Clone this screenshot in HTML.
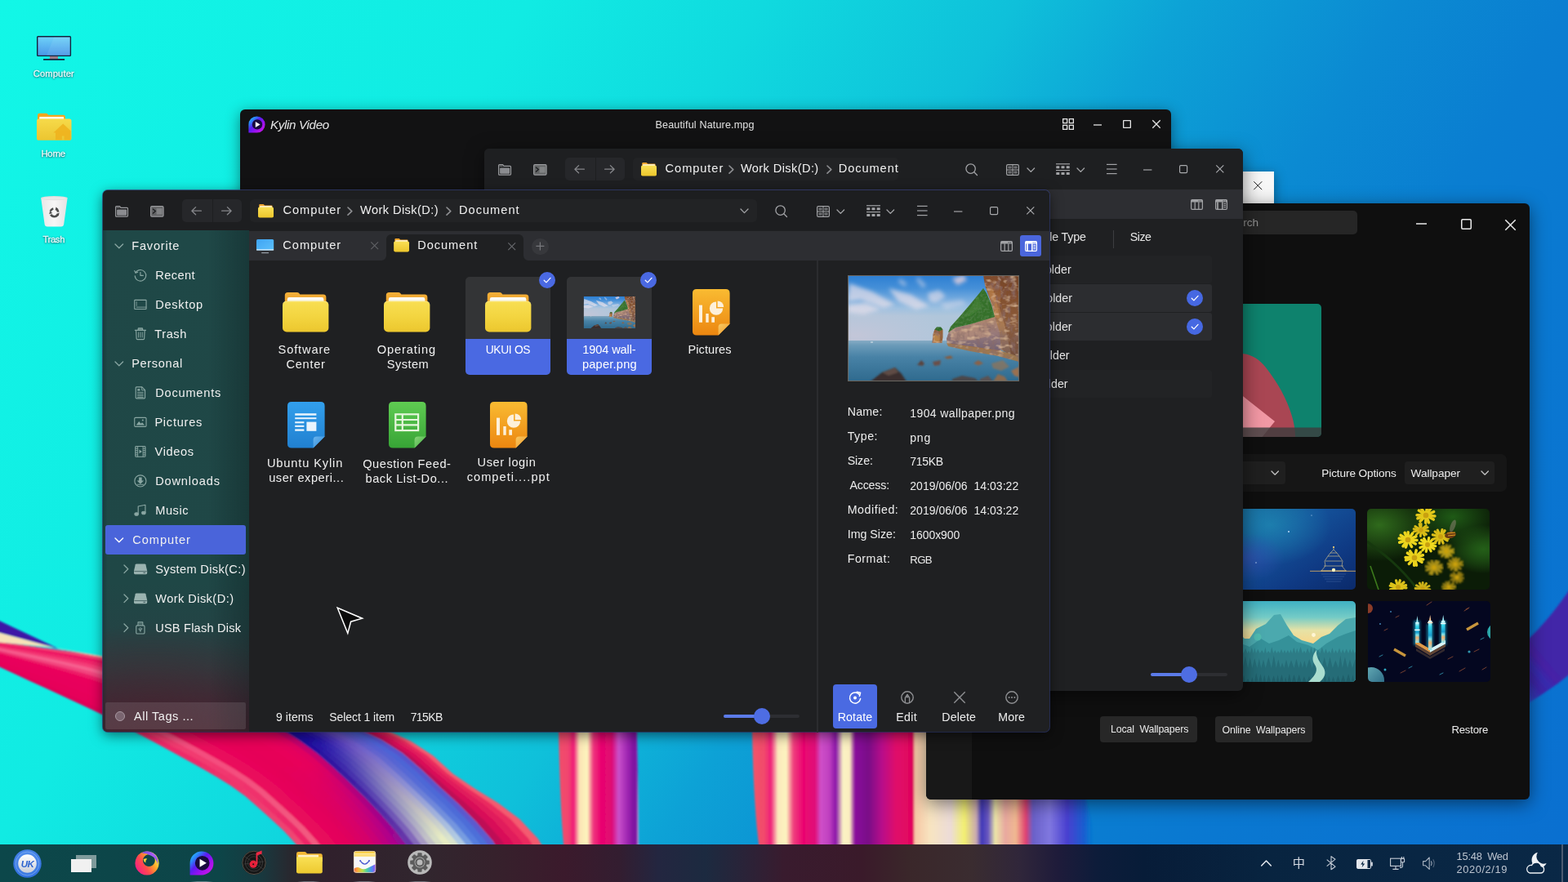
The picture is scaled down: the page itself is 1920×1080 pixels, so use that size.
<!DOCTYPE html>
<html lang="en">
<head>
<meta charset="utf-8">
<title>UKUI Desktop</title>
<style>
*{box-sizing:border-box;margin:0;padding:0}
html,body{width:1920px;height:1080px;overflow:hidden;background:#0d9fd6}
body{font-family:"Liberation Sans","Noto Sans CJK SC",sans-serif;color:#f2f2f2;font-size:14px;line-height:18px}
#root{position:absolute;left:0;top:0;width:1920px;height:1080px;overflow:hidden;will-change:transform}
.abs{position:absolute}
.win{position:absolute;overflow:hidden}
.sh{position:absolute;border-radius:6px}
.t{position:absolute;white-space:pre}
svg{position:absolute;overflow:visible}
.ic{stroke:#b4b5b8;fill:none;stroke-width:1.3;stroke-linecap:round;stroke-linejoin:round}
</style>
</head>
<body>
<div id="root">
<!-- wall -->
<svg id="wall" width="1920" height="1080" viewBox="0 0 1920 1080" style="left:0;top:0">
<defs>
<linearGradient id="wg" gradientUnits="userSpaceOnUse" x1="0" y1="0" x2="1858" y2="1174">
<stop offset="0" stop-color="#12f7e7"/>
<stop offset="0.25" stop-color="#11ebe3"/>
<stop offset="0.36" stop-color="#10dadf"/>
<stop offset="0.48" stop-color="#0fc0da"/>
<stop offset="0.56" stop-color="#0da2d6"/>
<stop offset="0.66" stop-color="#0b8ad2"/>
<stop offset="0.74" stop-color="#0a7ed1"/>
<stop offset="0.82" stop-color="#0a78d1"/>
<stop offset="1" stop-color="#0a6fd0"/>
</linearGradient>
<linearGradient id="v1" gradientUnits="userSpaceOnUse" x1="684" y1="0" x2="782" y2="0">
<stop offset="0" stop-color="#f0506a"/>
<stop offset="0.12" stop-color="#f2456f"/>
<stop offset="0.19" stop-color="#f01a78"/>
<stop offset="0.26" stop-color="#fbe3b5"/>
<stop offset="0.36" stop-color="#fdf6bd"/>
<stop offset="0.43" stop-color="#f03a80"/>
<stop offset="0.52" stop-color="#ea056f"/>
<stop offset="0.66" stop-color="#e00872"/>
<stop offset="0.75" stop-color="#c94fca"/>
<stop offset="0.85" stop-color="#a32ab4"/>
<stop offset="0.95" stop-color="#7b109e"/>
<stop offset="0.985" stop-color="#8a30b0"/>
<stop offset="1" stop-color="#f0e8f8"/>
</linearGradient>
<linearGradient id="v2" gradientUnits="userSpaceOnUse" x1="921" y1="0" x2="1340" y2="0">
<stop offset="0" stop-color="#f0566a"/>
<stop offset="0.035" stop-color="#f24a6c"/>
<stop offset="0.055" stop-color="#f0207a"/>
<stop offset="0.075" stop-color="#fbe8bb"/>
<stop offset="0.1" stop-color="#fdf4c0"/>
<stop offset="0.12" stop-color="#f0407e"/>
<stop offset="0.15" stop-color="#ea056f"/>
<stop offset="0.185" stop-color="#e0107a"/>
<stop offset="0.2" stop-color="#cf50c8"/>
<stop offset="0.225" stop-color="#c040c0"/>
<stop offset="0.245" stop-color="#8a18a8"/>
<stop offset="0.265" stop-color="#fbf3c4"/>
<stop offset="0.285" stop-color="#fbeec0"/>
<stop offset="0.3" stop-color="#8a0c9c"/>
<stop offset="0.34" stop-color="#7a0a88"/>
<stop offset="0.38" stop-color="#b8108a"/>
<stop offset="0.42" stop-color="#e00a6a"/>
<stop offset="0.47" stop-color="#e2055e"/>
<stop offset="0.475" stop-color="#f7c6a4"/>
<stop offset="0.52" stop-color="#f8e4c0"/>
<stop offset="0.58" stop-color="#ecdcd8"/>
<stop offset="0.62" stop-color="#f3f070"/>
<stop offset="0.655" stop-color="#c8a8b0"/>
<stop offset="0.67" stop-color="#4038b8"/>
<stop offset="0.69" stop-color="#6a58c0"/>
<stop offset="0.71" stop-color="#ebe6a8"/>
<stop offset="0.74" stop-color="#e8a8a0"/>
<stop offset="0.77" stop-color="#f0b890"/>
<stop offset="0.8" stop-color="#e04070"/>
<stop offset="0.82" stop-color="#6a60c8"/>
<stop offset="0.87" stop-color="#8078e0"/>
<stop offset="0.92" stop-color="#4a40d0"/>
<stop offset="0.97" stop-color="#1a5ed0"/>
<stop offset="1" stop-color="#0a6fd0" stop-opacity="0"/>
</linearGradient>
<linearGradient id="pr" gradientUnits="userSpaceOnUse" x1="1873" y1="860" x2="1912" y2="827">
<stop offset="0" stop-color="#2a4cc4"/>
<stop offset="0.15" stop-color="#3438b8"/>
<stop offset="0.4" stop-color="#3d24a8"/>
<stop offset="0.6" stop-color="#382cb0"/>
<stop offset="0.82" stop-color="#4720a6"/>
<stop offset="1" stop-color="#4226a8"/>
</linearGradient>
<filter id="bl2" x="-5%" y="-5%" width="110%" height="110%"><feGaussianBlur stdDeviation="1.2"/></filter>
</defs>
<rect width="1920" height="1080" fill="url(#wg)"/>
<path d="M1926 716C1906 745 1890 765 1873 781C1850 802 1825 820 1790 840L1790 902C1830 886 1855 872 1873 860C1895 846 1910 836 1926 822Z" fill="url(#pr)" filter="url(#bl2)"/>
<path d="M900 560C915 700 921 820 921 897C922 950 925 1000 929 1033L932 1085L1360 1085C1345 1040 1335 1000 1330 978C1310 900 1300 800 1310 560Z" fill="url(#v2)" filter="url(#bl2)"/>
<path d="M660 560C676 700 682 820 684 897C685 950 687 1000 690 1033L692 1085L785 1085C784 1060 783 1045 782 1033C782 990 781 940 780 897C778 800 772 700 760 560Z" fill="url(#v1)" filter="url(#bl2)"/>
<g filter="url(#bl2)">
<defs><linearGradient id="rg1" gradientUnits="userSpaceOnUse" x1="245.5" y1="935.0" x2="365.6" y2="1030.0"><stop offset="0" stop-color="#ee2c69"/><stop offset="1" stop-color="#ef4773"/></linearGradient>
<linearGradient id="rg2" gradientUnits="userSpaceOnUse" x1="258.6" y1="935.0" x2="375.4" y2="1030.0"><stop offset="0" stop-color="#f23a70"/><stop offset="1" stop-color="#ed2668"/></linearGradient>
<linearGradient id="rg3" gradientUnits="userSpaceOnUse" x1="271.4" y1="935.0" x2="385.2" y2="1030.0"><stop offset="0" stop-color="#f44d7e"/><stop offset="1" stop-color="#f25a80"/></linearGradient>
<linearGradient id="rg4" gradientUnits="userSpaceOnUse" x1="284.2" y1="935.0" x2="394.9" y2="1030.0"><stop offset="0" stop-color="#ea095c"/><stop offset="1" stop-color="#e9095c"/></linearGradient>
<linearGradient id="rg5" gradientUnits="userSpaceOnUse" x1="296.9" y1="935.0" x2="404.5" y2="1030.0"><stop offset="0" stop-color="#e9075b"/><stop offset="1" stop-color="#e7085c"/></linearGradient>
<linearGradient id="rg6" gradientUnits="userSpaceOnUse" x1="309.2" y1="935.0" x2="414.1" y2="1030.0"><stop offset="0" stop-color="#e8045a"/><stop offset="1" stop-color="#e5065c"/></linearGradient>
<linearGradient id="rg7" gradientUnits="userSpaceOnUse" x1="321.1" y1="935.0" x2="423.7" y2="1030.0"><stop offset="0" stop-color="#e70159"/><stop offset="1" stop-color="#e3055c"/></linearGradient>
<linearGradient id="rg8" gradientUnits="userSpaceOnUse" x1="332.9" y1="935.0" x2="433.4" y2="1030.0"><stop offset="0" stop-color="#e60058"/><stop offset="1" stop-color="#df035f"/></linearGradient>
<linearGradient id="rg9" gradientUnits="userSpaceOnUse" x1="344.6" y1="935.0" x2="443.0" y2="1030.0"><stop offset="0" stop-color="#e70159"/><stop offset="1" stop-color="#d90266"/></linearGradient>
<linearGradient id="rg10" gradientUnits="userSpaceOnUse" x1="356.1" y1="935.0" x2="452.6" y2="1030.0"><stop offset="0" stop-color="#e70259"/><stop offset="1" stop-color="#d4006c"/></linearGradient>
<linearGradient id="rg11" gradientUnits="userSpaceOnUse" x1="367.0" y1="935.0" x2="462.3" y2="1030.0"><stop offset="0" stop-color="#e8035a"/><stop offset="1" stop-color="#c90076"/></linearGradient>
<linearGradient id="rg12" gradientUnits="userSpaceOnUse" x1="377.8" y1="935.0" x2="471.9" y2="1030.0"><stop offset="0" stop-color="#e6035b"/><stop offset="1" stop-color="#bc0081"/></linearGradient>
<linearGradient id="rg13" gradientUnits="userSpaceOnUse" x1="388.6" y1="935.0" x2="481.5" y2="1030.0"><stop offset="0" stop-color="#e10160"/><stop offset="1" stop-color="#ae018c"/></linearGradient>
<linearGradient id="rg14" gradientUnits="userSpaceOnUse" x1="397.5" y1="935.0" x2="489.5" y2="1030.0"><stop offset="0" stop-color="#c7046e"/><stop offset="1" stop-color="#970794"/></linearGradient>
<linearGradient id="rg15" gradientUnits="userSpaceOnUse" x1="369.6" y1="905.0" x2="496.5" y2="1025.0"><stop offset="0" stop-color="#1b0b9e"/><stop offset="1" stop-color="#6735aa"/></linearGradient>
<linearGradient id="rg16" gradientUnits="userSpaceOnUse" x1="377.4" y1="905.0" x2="505.5" y2="1025.0"><stop offset="0" stop-color="#1e0ea3"/><stop offset="1" stop-color="#8469bb"/></linearGradient>
<linearGradient id="rg17" gradientUnits="userSpaceOnUse" x1="385.2" y1="905.0" x2="514.5" y2="1025.0"><stop offset="0" stop-color="#2111a8"/><stop offset="1" stop-color="#a79bc4"/></linearGradient>
<linearGradient id="rg18" gradientUnits="userSpaceOnUse" x1="393.1" y1="905.0" x2="523.6" y2="1025.0"><stop offset="0" stop-color="#2a19ad"/><stop offset="1" stop-color="#c2c2c7"/></linearGradient>
<linearGradient id="rg19" gradientUnits="userSpaceOnUse" x1="401.1" y1="905.0" x2="532.7" y2="1025.0"><stop offset="0" stop-color="#3b26b4"/><stop offset="1" stop-color="#d7dec5"/></linearGradient>
<linearGradient id="rg20" gradientUnits="userSpaceOnUse" x1="409.3" y1="905.0" x2="541.7" y2="1025.0"><stop offset="0" stop-color="#4c34bb"/><stop offset="1" stop-color="#e7ecc3"/></linearGradient>
<linearGradient id="rg21" gradientUnits="userSpaceOnUse" x1="417.7" y1="905.0" x2="550.8" y2="1025.0"><stop offset="0" stop-color="#5e46c0"/><stop offset="1" stop-color="#dae4cd"/></linearGradient>
<linearGradient id="rg22" gradientUnits="userSpaceOnUse" x1="426.2" y1="905.0" x2="559.9" y2="1025.0"><stop offset="0" stop-color="#6753c5"/><stop offset="1" stop-color="#b1cbe2"/></linearGradient>
<linearGradient id="rg23" gradientUnits="userSpaceOnUse" x1="434.9" y1="905.0" x2="569.0" y2="1025.0"><stop offset="0" stop-color="#5e58ca"/><stop offset="1" stop-color="#779de1"/></linearGradient>
<linearGradient id="rg24" gradientUnits="userSpaceOnUse" x1="443.8" y1="905.0" x2="578.1" y2="1025.0"><stop offset="0" stop-color="#565ccf"/><stop offset="1" stop-color="#567ede"/></linearGradient>
<linearGradient id="rg25" gradientUnits="userSpaceOnUse" x1="452.8" y1="905.0" x2="587.2" y2="1025.0"><stop offset="0" stop-color="#4d61d4"/><stop offset="1" stop-color="#4d6fd9"/></linearGradient>
<linearGradient id="rg26" gradientUnits="userSpaceOnUse" x1="460.4" y1="905.0" x2="594.8" y2="1025.0"><stop offset="0" stop-color="#5353cc"/><stop offset="1" stop-color="#5d5bcf"/></linearGradient>
</defs>
<polygon points="-40.0,800.0 -20.3,808.0 -0.8,816.6 18.6,825.5 37.9,834.4 57.3,843.3 76.6,852.3 95.9,861.3 115.2,870.3 134.4,879.5 153.3,889.4 171.9,899.7 179.2,894.3 160.0,883.9 140.5,874.1 120.7,865.0 100.7,856.2 80.8,847.5 60.7,839.0 40.7,830.6 20.6,822.2 0.6,813.9 -19.6,805.7 -40.0,798.2" fill="#e00559"/>
<polygon points="153.3,889.4 171.9,899.7 190.6,909.8 209.4,920.0 228.0,930.2 246.6,940.6 265.1,951.2 283.2,962.4 300.5,974.9 316.4,989.1 332.2,1003.3 347.8,1017.8 362.2,1033.5 375.2,1050.3 387.7,1067.6 400.0,1085.0 412.1,1085.0 399.8,1067.0 387.3,1049.1 373.9,1031.8 359.2,1015.7 343.3,1000.8 327.1,986.1 310.9,971.5 293.3,958.5 274.9,946.9 256.0,935.9 236.9,925.3 217.7,914.9 198.5,904.6 179.2,894.3 160.0,883.9" fill="url(#rg1)"/>
<polygon points="-40.0,798.6 -19.8,806.3 0.2,814.6 20.1,823.0 40.0,831.6 59.8,840.1 79.7,848.8 99.5,857.5 119.3,866.4 138.9,875.5 158.2,885.3 164.9,879.9 145.0,870.1 124.7,861.0 104.3,852.4 83.8,844.0 63.3,835.8 42.8,827.7 22.2,819.7 1.6,811.8 -19.1,804.0 -40.0,796.8" fill="#e6045a"/>
<polygon points="138.9,875.5 158.2,885.3 177.3,895.7 196.4,905.9 215.5,916.2 234.6,926.6 253.6,937.1 272.3,948.0 290.7,959.6 308.2,972.4 324.3,986.9 340.4,1001.4 356.3,1016.2 370.9,1032.3 384.2,1049.4 396.7,1067.1 408.9,1085.0 421.0,1085.0 408.8,1066.5 396.2,1048.2 382.6,1030.6 367.6,1014.1 351.5,998.9 335.1,983.9 318.6,969.0 300.8,955.7 282.1,943.6 262.9,932.4 243.5,921.6 223.9,911.1 204.2,900.7 184.6,890.3 164.9,879.9 145.0,870.1" fill="url(#rg2)"/>
<polygon points="-40.0,797.3 -19.3,804.6 1.2,812.5 21.6,820.6 42.0,828.7 62.4,836.9 82.8,845.2 103.1,853.7 123.3,862.4 143.4,871.5 163.2,881.3 169.9,875.9 149.5,866.1 128.8,857.0 107.9,848.6 86.9,840.5 65.9,832.6 44.8,824.9 23.7,817.3 2.6,809.7 -18.6,802.3 -40.0,795.5" fill="#e7045a"/>
<polygon points="143.4,871.5 163.2,881.3 182.7,891.7 202.2,902.0 221.7,912.4 241.2,922.9 260.5,933.7 279.6,944.8 298.2,956.7 315.9,969.9 332.3,984.6 348.6,999.5 364.7,1014.7 379.5,1031.0 393.1,1048.5 405.7,1066.6 417.9,1085.0 429.9,1085.0 417.8,1066.0 405.1,1047.3 391.3,1029.4 376.1,1012.6 359.7,997.0 343.0,981.7 326.3,966.5 308.3,952.8 289.3,940.4 269.8,929.0 250.0,918.0 230.1,907.3 210.0,896.8 190.0,886.3 169.9,875.9 149.5,866.1" fill="url(#rg3)"/>
<polygon points="-40.0,795.9 -18.8,802.9 2.2,810.5 23.2,818.1 44.1,825.9 65.0,833.7 85.8,841.7 106.7,849.9 127.4,858.4 148.0,867.5 168.2,877.3 174.8,871.9 154.1,862.0 132.9,853.1 111.5,844.8 90.0,837.0 68.5,829.4 46.9,822.1 25.2,814.8 3.6,807.7 -18.1,800.6 -40.0,794.1" fill="#e8055b"/>
<polygon points="148.0,867.5 168.2,877.3 188.1,887.7 208.0,898.1 227.9,908.6 247.7,919.3 267.4,930.2 286.8,941.6 305.6,953.8 323.6,967.4 340.3,982.4 356.8,997.6 373.1,1013.1 388.2,1029.8 402.0,1047.6 414.7,1066.1 426.8,1085.0 438.8,1085.0 426.8,1065.5 414.0,1046.3 399.9,1028.1 384.5,1011.1 367.9,995.1 351.0,979.4 334.0,964.0 315.7,949.9 296.5,937.2 276.7,925.5 256.6,914.3 236.3,903.5 215.8,892.9 195.3,882.4 174.8,871.9 154.1,862.0" fill="url(#rg4)"/>
<polygon points="-40.0,794.6 -18.3,801.2 3.2,808.4 24.7,815.7 46.1,823.1 67.6,830.5 88.9,838.2 110.2,846.2 131.5,854.5 152.5,863.4 173.1,873.3 179.8,867.9 158.6,858.0 137.0,849.1 115.1,841.1 93.1,833.5 71.0,826.2 48.9,819.2 26.8,812.4 4.6,805.6 -17.6,798.9 -40.0,792.7" fill="#e8055b"/>
<polygon points="152.5,863.4 173.1,873.3 193.5,883.7 213.8,894.2 234.1,904.8 254.3,915.6 274.3,926.7 294.0,938.3 313.1,950.9 331.3,964.8 348.2,980.2 365.0,995.7 381.5,1011.6 396.9,1028.6 410.9,1046.7 423.7,1065.6 435.7,1085.0 447.8,1085.0 435.8,1065.0 423.0,1045.4 408.6,1026.9 392.9,1009.5 376.1,993.2 359.0,977.2 341.7,961.4 323.2,947.0 303.8,934.0 283.6,922.0 263.1,910.7 242.4,899.7 221.6,889.0 200.7,878.4 179.8,867.9 158.6,858.0" fill="url(#rg5)"/>
<polygon points="-40.0,793.2 -17.8,799.5 4.3,806.3 26.2,813.2 48.2,820.2 70.1,827.3 92.0,834.7 113.8,842.4 135.5,850.5 157.0,859.4 178.1,869.3 184.7,863.9 163.1,854.0 141.0,845.1 118.7,837.3 96.2,829.9 73.6,823.0 51.0,816.4 28.3,809.9 5.6,803.5 -17.1,797.2 -40.0,791.4" fill="#e9055b"/>
<polygon points="157.0,859.4 178.1,869.3 198.8,879.8 219.6,890.3 240.3,901.0 260.8,911.9 281.2,923.2 301.2,935.1 320.6,948.0 339.0,962.3 356.2,978.0 373.3,993.8 390.0,1010.1 405.6,1027.3 419.8,1045.7 432.7,1065.1 444.6,1085.0 456.7,1085.0 444.8,1064.5 431.9,1044.5 417.3,1025.7 401.3,1008.0 384.3,991.3 366.9,975.0 349.3,958.9 330.7,944.1 311.0,930.8 290.5,918.6 269.7,907.0 248.6,895.9 227.4,885.0 206.1,874.4 184.7,863.9 163.1,854.0" fill="url(#rg6)"/>
<polygon points="-40.0,791.9 -17.3,797.8 5.3,804.3 27.8,810.8 50.2,817.4 72.7,824.1 95.1,831.2 117.4,838.6 139.6,846.5 161.5,855.4 167.6,850.0 145.1,841.2 122.2,833.5 99.2,826.4 76.2,819.8 53.0,813.5 29.8,807.5 6.6,801.5 -16.6,795.5 -40.0,790.0" fill="#ea065c"/>
<polygon points="139.6,846.5 161.5,855.4 183.0,865.3 204.2,875.8 225.4,886.4 246.5,897.2 267.4,908.3 288.1,919.8 308.5,931.9 328.1,945.2 346.7,959.8 364.1,975.8 381.5,991.9 398.4,1008.5 414.2,1026.1 428.8,1044.8 441.7,1064.6 453.6,1085.0 465.6,1085.0 453.8,1064.0 440.8,1043.6 425.9,1024.5 409.7,1006.4 392.5,989.4 374.9,972.8 357.0,956.4 338.2,941.3 318.2,927.6 297.5,915.1 276.3,903.4 254.8,892.1 233.2,881.1 211.5,870.4 189.7,859.9 167.6,850.0 145.1,841.2" fill="url(#rg7)"/>
<polygon points="-40.0,790.5 -16.8,796.1 6.3,802.2 29.3,808.3 52.3,814.5 75.3,820.9 98.2,827.7 121.0,834.8 143.7,842.6 166.0,851.4 172.1,846.0 149.2,837.2 125.8,829.7 102.3,822.9 78.7,816.6 55.1,810.7 31.4,805.0 7.6,799.4 -16.1,793.8 -40.0,788.7" fill="#ed1d68"/>
<polygon points="143.7,842.6 166.0,851.4 188.0,861.3 209.6,871.8 231.2,882.5 252.6,893.4 274.0,904.6 295.0,916.3 315.7,928.7 335.6,942.3 354.4,957.3 372.1,973.6 389.7,990.0 406.8,1007.0 422.9,1024.9 437.7,1043.9 450.7,1064.1 462.5,1085.0 474.6,1085.0 462.8,1063.5 449.7,1042.6 434.6,1023.2 418.2,1004.9 400.8,987.5 382.9,970.6 364.7,953.9 345.6,938.4 325.4,924.3 304.4,911.6 282.8,899.7 261.0,888.3 239.0,877.2 216.9,866.4 194.7,855.9 172.1,846.0 149.2,837.2" fill="url(#rg8)"/>
<polygon points="-40.0,789.1 -16.3,794.4 7.3,800.1 30.8,805.9 54.3,811.7 77.8,817.7 101.3,824.1 124.6,831.1 147.8,838.6 170.6,847.4 176.7,841.9 153.2,833.2 129.4,826.0 105.4,819.4 81.3,813.4 57.1,807.9 32.9,802.6 8.6,797.4 -15.6,792.1 -40.0,787.3" fill="#f2447e"/>
<polygon points="147.8,838.6 170.6,847.4 192.9,857.3 215.0,867.8 237.0,878.6 258.8,889.6 280.5,901.0 301.9,912.8 322.9,925.5 343.0,939.4 362.0,954.8 380.1,971.4 397.9,988.1 415.2,1005.4 431.6,1023.7 446.6,1043.0 459.7,1063.6 471.4,1085.0 483.5,1085.0 471.8,1063.0 458.6,1041.7 443.3,1022.0 426.6,1003.3 409.0,985.6 390.8,968.4 372.4,951.4 353.1,935.5 332.7,921.1 311.3,908.1 289.4,896.0 267.2,884.5 244.8,873.3 222.3,862.4 199.6,851.9 176.7,841.9 153.2,833.2" fill="url(#rg9)"/>
<polygon points="-40.0,787.8 -15.8,792.7 8.3,798.1 32.3,803.4 56.4,808.9 80.4,814.5 104.3,820.6 128.2,827.3 151.8,834.6 175.1,843.3 181.2,837.9 157.3,829.3 133.0,822.2 108.5,815.9 83.9,810.2 59.2,805.0 34.4,800.1 9.6,795.3 -15.1,790.4 -40.0,786.0" fill="#f75f8f"/>
<polygon points="151.8,834.6 175.1,843.3 197.9,853.3 220.4,863.8 242.8,874.7 265.0,885.8 287.1,897.3 308.9,909.4 330.1,922.3 350.5,936.5 369.7,952.3 388.0,969.1 406.1,986.2 423.6,1003.9 440.2,1022.4 455.5,1042.0 468.7,1063.1 480.4,1085.0 492.4,1085.0 480.8,1062.5 467.6,1040.8 451.9,1020.8 435.0,1001.8 417.2,983.7 398.8,966.2 380.1,948.9 360.6,932.6 339.9,917.9 318.2,904.7 295.9,892.4 273.3,880.7 250.6,869.4 227.6,858.5 204.6,847.9 181.2,837.9 157.3,829.3" fill="url(#rg10)"/>
<polygon points="-40.0,786.4 -15.3,791.0 9.3,796.0 33.9,801.0 58.4,806.0 83.0,811.3 107.4,817.1 131.7,823.5 155.9,830.7 179.6,839.3 185.7,833.9 161.4,825.3 136.6,818.4 111.6,812.3 86.4,807.0 61.2,802.2 35.9,797.7 10.7,793.2 -14.6,788.7 -40.0,784.6" fill="#f43e78"/>
<polygon points="155.9,830.7 179.6,839.3 202.8,849.3 225.8,859.9 248.5,870.8 271.2,882.0 293.6,893.7 315.8,905.9 337.4,919.0 358.0,933.6 377.4,949.7 396.0,966.9 414.3,984.3 432.1,1002.3 448.9,1021.2 464.4,1041.1 477.7,1062.6 489.3,1085.0 501.3,1085.0 489.8,1062.0 476.5,1039.9 460.6,1019.5 443.4,1000.3 425.4,981.8 406.7,963.9 387.8,946.4 368.1,929.8 347.1,914.7 325.1,901.2 302.5,888.7 279.5,876.9 256.4,865.5 233.0,854.5 209.5,843.8 185.7,833.9 161.4,825.3" fill="url(#rg11)"/>
<polygon points="-40.0,785.1 -14.8,789.3 10.3,794.0 35.4,798.5 60.5,803.2 85.5,808.1 110.5,813.6 135.3,819.7 160.0,826.7 165.5,821.3 140.2,814.6 114.7,808.8 89.0,803.8 63.3,799.4 37.5,795.2 11.7,791.2 -14.1,787.0 -40.0,783.2" fill="#f1266a"/>
<polygon points="135.3,819.7 160.0,826.7 184.1,835.3 207.8,845.2 231.1,855.9 254.3,866.9 277.4,878.3 300.2,890.0 322.7,902.4 344.6,915.8 365.5,930.8 385.1,947.2 404.0,964.7 422.5,982.5 440.5,1000.8 457.6,1020.0 473.4,1040.2 486.7,1062.1 498.2,1085.0 510.3,1085.0 498.8,1061.5 485.4,1039.0 469.3,1018.3 451.9,998.7 433.6,979.9 414.7,961.7 395.5,943.8 375.5,926.9 354.3,911.5 332.0,897.7 309.1,885.1 285.7,873.1 262.2,861.6 238.4,850.5 214.5,839.8 190.2,829.9 165.5,821.3 140.2,814.6" fill="url(#rg12)"/>
<polygon points="-40.0,783.7 -14.3,787.6 11.3,791.9 36.9,796.1 62.5,800.4 88.1,804.9 113.6,810.1 138.9,815.9 164.0,822.7 169.5,817.4 143.8,810.8 117.7,805.3 91.6,800.6 65.3,796.5 39.0,792.8 12.7,789.1 -13.6,785.3 -40.0,781.9" fill="#ee1463"/>
<polygon points="138.9,815.9 164.0,822.7 188.6,831.3 212.7,841.2 236.5,851.9 260.1,863.0 283.6,874.5 306.8,886.3 329.6,899.0 351.8,912.6 372.9,927.9 392.8,944.7 411.9,962.5 430.7,980.6 448.9,999.2 466.2,1018.7 482.3,1039.3 495.7,1061.6 507.1,1085.0 519.2,1085.0 507.8,1061.0 494.3,1038.0 477.9,1017.1 460.3,997.2 441.8,978.0 422.7,959.5 403.2,941.3 383.0,924.0 361.6,908.3 338.9,894.3 315.6,881.4 291.9,869.3 267.9,857.7 243.8,846.5 219.4,835.8 194.7,825.9 169.5,817.4 143.8,810.8" fill="url(#rg13)"/>
<polygon points="-40.0,782.4 -13.8,785.9 12.3,789.8 38.5,793.6 64.6,797.5 90.7,801.7 116.7,806.5 142.5,812.2 168.1,818.8 172.2,814.8 146.1,808.4 119.7,803.0 93.3,798.5 66.6,794.7 40.0,791.2 13.3,787.8 -13.3,784.2 -40.0,781.0" fill="#f24b75"/>
<polygon points="142.5,812.2 168.1,818.8 193.2,827.3 217.7,837.2 241.9,847.9 265.9,859.1 289.7,870.7 313.3,882.7 336.5,895.5 359.0,909.4 380.4,925.0 400.5,942.2 419.9,960.3 438.9,978.7 457.3,997.7 474.9,1017.5 491.2,1038.4 504.7,1061.1 516.1,1085.0 525.0,1085.0 513.7,1060.6 500.1,1037.4 483.6,1016.3 465.7,996.2 447.2,976.8 427.8,958.1 408.2,939.7 387.9,922.1 366.3,906.2 343.4,892.0 319.9,879.0 295.9,866.9 271.7,855.2 247.3,843.9 222.6,833.2 197.7,823.2 172.2,814.8 146.1,808.4" fill="url(#rg14)"/>
<polygon points="-40.0,781.0 -13.3,784.2 13.3,787.8 40.0,791.2 66.6,794.7 93.3,798.5 119.7,803.0 146.1,808.4 172.2,814.8 197.7,823.2 222.6,833.2 247.3,843.9 271.7,855.2 295.9,866.9 319.9,879.0 343.4,892.0 366.3,906.2 387.9,922.1 408.2,939.7 427.8,958.1 447.2,976.8 465.7,996.2 483.6,1016.3 500.1,1037.4 513.7,1060.6 525.0,1085.0 536.8,1085.0 525.5,1060.1 511.7,1036.6 494.8,1015.2 476.5,994.9 457.4,975.3 437.8,956.3 417.8,937.7 396.8,920.3 374.4,904.7 350.9,890.8 326.8,878.1 302.2,866.2 277.4,854.8 252.5,843.7 227.3,833.2 201.8,823.4 175.8,815.0 149.2,808.6 122.4,803.4 95.5,798.9 68.4,795.0 41.3,791.4 14.2,787.9 -12.9,784.3 -40.0,781.0" fill="url(#rg15)"/>
<polygon points="-40.0,781.0 -13.0,784.2 14.0,787.9 41.0,791.3 67.9,794.9 94.9,798.8 121.7,803.3 148.4,808.5 174.9,814.9 200.7,823.4 226.1,833.2 251.1,843.8 275.9,854.9 300.6,866.4 325.0,878.4 349.0,891.1 372.3,905.1 394.5,920.8 415.3,938.2 435.2,956.8 454.8,975.7 473.7,995.2 491.9,1015.5 508.7,1036.8 522.5,1060.3 533.8,1085.0 545.6,1085.0 534.3,1059.7 520.4,1035.9 503.1,1014.3 484.5,993.9 465.1,974.2 445.2,955.0 424.8,936.3 403.3,918.9 380.5,903.6 356.5,889.9 331.9,877.5 306.9,865.7 281.7,854.5 256.3,843.6 230.7,833.2 204.8,823.5 178.5,815.1 151.6,808.7 124.4,803.7 97.1,799.2 69.7,795.2 42.3,791.6 14.9,788.0 -12.5,784.3 -40.0,781.0" fill="url(#rg16)"/>
<polygon points="-40.0,781.0 -12.7,784.3 14.6,788.0 42.0,791.5 69.3,795.2 96.5,799.1 123.7,803.6 150.7,808.7 177.5,815.1 203.7,823.5 229.5,833.2 254.9,843.7 280.2,854.6 305.3,865.9 330.1,877.7 354.5,890.2 378.4,903.9 401.0,919.4 422.3,936.8 442.6,955.5 462.4,974.6 481.7,994.2 500.2,1014.6 517.3,1036.2 531.3,1059.9 542.5,1085.0 554.3,1085.0 543.1,1059.4 529.0,1035.3 511.4,1013.5 492.5,992.9 472.7,973.1 452.5,953.7 431.9,934.8 409.9,917.6 386.5,902.4 362.1,889.1 337.0,876.8 311.6,865.3 285.9,854.2 260.1,843.5 234.1,833.3 207.8,823.6 181.1,815.3 153.9,808.9 126.3,804.0 98.7,799.5 71.0,795.5 43.3,791.7 15.5,788.1 -12.2,784.3 -40.0,781.0" fill="url(#rg17)"/>
<polygon points="-40.0,781.0 -12.3,784.3 15.3,788.1 42.9,791.7 70.6,795.4 98.2,799.4 125.7,803.9 153.1,808.8 180.2,815.2 206.8,823.6 232.9,833.3 258.8,843.5 284.4,854.3 309.9,865.4 335.2,877.0 360.1,889.4 384.4,902.8 407.6,918.0 429.4,935.3 449.9,954.2 470.0,973.5 489.7,993.2 508.5,1013.8 525.9,1035.5 540.0,1059.5 551.2,1085.0 563.1,1085.0 551.9,1059.0 537.6,1034.6 519.7,1012.7 500.4,991.9 480.3,972.0 459.9,952.4 438.9,933.4 416.5,916.2 392.6,901.3 367.6,888.2 342.1,876.1 316.2,864.8 290.1,853.9 263.9,843.4 237.5,833.3 210.9,823.7 183.8,815.4 156.2,809.1 128.3,804.3 100.4,799.8 72.3,795.7 44.3,791.9 16.2,788.2 -11.9,784.4 -40.0,781.0" fill="url(#rg18)"/>
<polygon points="-40.0,781.0 -12.0,784.4 16.0,788.2 43.9,791.8 71.9,795.6 99.8,799.7 127.6,804.2 155.4,809.0 182.9,815.3 209.8,823.7 236.3,833.3 262.6,843.4 288.7,854.0 314.6,865.0 340.3,876.4 365.7,888.5 390.5,901.7 414.2,916.7 436.5,933.9 457.3,952.9 477.6,972.4 497.6,992.3 516.8,1013.0 534.6,1034.9 548.8,1059.1 560.0,1085.0 571.8,1085.0 560.7,1058.6 546.2,1034.0 528.0,1011.9 508.4,991.0 487.9,971.0 467.3,951.1 446.0,931.9 423.1,914.9 398.6,900.2 373.2,887.3 347.2,875.5 320.9,864.3 294.4,853.6 267.7,843.2 240.9,833.3 213.9,823.9 186.5,815.5 158.5,809.2 130.3,804.6 102.0,800.1 73.6,796.0 45.2,792.1 16.8,788.3 -11.6,784.4 -40.0,781.0" fill="url(#rg19)"/>
<polygon points="-40.0,781.0 -11.7,784.4 16.6,788.3 44.9,792.0 73.2,795.9 101.4,800.0 129.6,804.5 157.7,809.2 185.5,815.5 212.8,823.8 239.7,833.3 266.4,843.3 292.9,853.7 319.3,864.5 345.4,875.7 371.2,887.6 396.5,900.6 420.8,915.3 443.5,932.4 464.7,951.6 485.3,971.3 505.6,991.3 525.1,1012.1 543.2,1034.2 557.6,1058.7 568.8,1085.0 580.6,1085.0 569.5,1058.2 554.8,1033.3 536.3,1011.0 516.4,990.0 495.5,969.9 474.6,949.8 453.0,930.5 429.7,913.5 404.7,899.1 378.8,886.4 352.3,874.8 325.6,863.8 298.6,853.3 271.5,843.1 244.3,833.3 216.9,824.0 189.2,815.7 160.9,809.4 132.3,804.9 103.6,800.4 74.9,796.2 46.2,792.2 17.5,788.4 -11.2,784.5 -40.0,781.0" fill="url(#rg20)"/>
<polygon points="-40.0,781.0 -11.3,784.5 17.3,788.4 45.9,792.2 74.5,796.1 103.1,800.3 131.6,804.8 160.1,809.3 188.2,815.6 215.8,823.9 243.1,833.3 270.2,843.1 297.1,853.4 323.9,864.0 350.5,875.0 376.8,886.7 402.6,899.5 427.4,914.0 450.6,931.0 472.1,950.3 492.9,970.2 513.6,990.3 533.4,1011.3 551.8,1033.6 566.4,1058.4 577.5,1085.0 589.3,1085.0 578.3,1057.9 563.4,1032.7 544.6,1010.2 524.4,989.0 503.2,968.8 482.0,948.5 460.1,929.0 436.3,912.1 410.8,898.0 384.3,885.5 357.4,874.1 330.2,863.4 302.9,853.0 275.4,843.0 247.7,833.3 219.9,824.1 191.8,815.8 163.2,809.5 134.2,805.2 105.3,800.7 76.2,796.4 47.2,792.4 18.2,788.5 -10.9,784.5 -40.0,781.0" fill="url(#rg21)"/>
<polygon points="-40.0,781.0 -11.0,784.5 17.9,788.5 46.9,792.4 75.8,796.4 104.7,800.6 133.5,805.1 162.4,809.5 190.9,815.8 218.9,824.0 246.5,833.3 274.0,843.0 301.4,853.1 328.6,863.5 355.6,874.4 382.4,885.8 408.6,898.4 434.0,912.6 457.6,929.5 479.4,949.0 500.5,969.2 521.6,989.4 541.7,1010.5 560.4,1032.9 575.2,1058.0 586.2,1085.0 598.1,1085.0 587.1,1057.5 572.0,1032.0 552.9,1009.4 532.3,988.0 510.8,967.7 489.4,947.2 467.2,927.6 442.8,910.8 416.8,896.8 389.9,884.7 362.5,873.5 334.9,862.9 307.1,852.7 279.2,842.8 251.1,833.3 223.0,824.2 194.5,815.9 165.5,809.7 136.2,805.5 106.9,801.0 77.6,796.7 48.2,792.6 18.8,788.6 -10.6,784.6 -40.0,781.0" fill="url(#rg22)"/>
<polygon points="-40.0,781.0 -10.7,784.5 18.6,788.6 47.8,792.5 77.1,796.6 106.3,800.9 135.5,805.4 164.7,809.6 193.6,815.9 221.9,824.2 249.9,833.3 277.8,842.9 305.6,852.8 333.3,863.0 360.7,873.7 387.9,885.0 414.7,897.2 440.5,911.2 464.7,928.1 486.8,947.7 508.1,968.1 529.5,988.4 550.0,1009.7 569.0,1032.3 584.0,1057.6 595.0,1085.0 606.8,1085.0 595.9,1057.1 580.6,1031.4 561.2,1008.5 540.3,987.1 518.4,966.6 496.7,945.9 474.2,926.1 449.4,909.4 422.9,895.7 395.5,883.8 367.6,872.8 339.6,862.4 311.3,852.4 283.0,842.7 254.6,833.3 226.0,824.3 197.2,816.1 167.9,809.8 138.2,805.7 108.5,801.3 78.9,796.9 49.2,792.8 19.5,788.7 -10.2,784.6 -40.0,781.0" fill="url(#rg23)"/>
<polygon points="-40.0,781.0 -10.4,784.6 19.2,788.6 48.8,792.7 78.4,796.8 108.0,801.2 137.5,805.6 167.0,809.8 196.2,816.0 224.9,824.3 253.4,833.3 281.7,842.8 309.9,852.5 337.9,862.6 365.8,873.0 393.5,884.1 420.7,896.1 447.1,909.9 471.8,926.6 494.2,946.4 515.7,967.0 537.5,987.4 558.3,1008.8 577.6,1031.6 592.8,1057.2 603.8,1085.0 615.6,1085.0 604.7,1056.7 589.2,1030.8 569.5,1007.7 548.3,986.1 526.0,965.5 504.1,944.6 481.3,924.7 456.0,908.1 428.9,894.6 401.0,882.9 372.7,872.1 344.2,861.9 315.6,852.1 286.8,842.6 258.0,833.4 229.0,824.4 199.8,816.2 170.2,810.0 140.1,806.0 110.2,801.6 80.2,797.2 50.2,792.9 20.1,788.8 -9.9,784.6 -40.0,781.0" fill="url(#rg24)"/>
<polygon points="-40.0,781.0 -10.0,784.6 19.9,788.7 49.8,792.9 79.7,797.1 109.6,801.5 139.5,805.9 169.4,809.9 198.9,816.2 228.0,824.4 256.8,833.3 285.5,842.6 314.1,852.2 342.6,862.1 370.9,872.4 399.1,883.2 426.8,895.0 453.7,908.5 478.8,925.2 501.5,945.1 523.4,965.9 545.5,986.4 566.6,1008.0 586.2,1031.0 601.6,1056.9 612.5,1085.0 624.3,1085.0 613.5,1056.3 597.8,1030.1 577.8,1006.9 556.3,985.1 533.7,964.4 511.5,943.3 488.3,923.2 462.6,906.7 435.0,893.5 406.6,882.0 377.8,871.5 348.9,861.4 319.8,851.8 290.6,842.4 261.4,833.4 232.0,824.5 202.5,816.3 172.5,810.1 142.1,806.3 111.8,801.9 81.5,797.4 51.1,793.1 20.8,788.9 -9.6,784.7 -40.0,781.0" fill="url(#rg25)"/>
<polygon points="-40.0,781.0 -9.7,784.7 20.6,788.8 50.8,793.0 81.0,797.3 111.2,801.8 141.4,806.2 171.7,810.1 201.6,816.3 231.0,824.5 260.2,833.4 289.3,842.5 318.3,851.9 347.3,861.6 376.1,871.7 404.6,882.3 432.9,893.9 460.3,907.2 485.9,923.7 508.9,943.8 531.0,964.8 553.5,985.5 574.9,1007.2 594.8,1030.3 610.4,1056.5 621.2,1085.0 630.0,1085.0 619.2,1056.1 603.4,1029.7 583.2,1006.4 561.4,984.5 538.6,963.7 516.3,942.5 492.9,922.3 466.9,905.8 438.9,892.8 410.2,881.4 381.2,871.0 351.9,861.1 322.6,851.6 293.1,842.4 263.6,833.4 234.0,824.6 204.3,816.4 174.0,810.2 143.4,806.5 112.9,802.1 82.3,797.6 51.8,793.2 21.2,788.9 -9.4,784.7 -40.0,781.0" fill="url(#rg26)"/>
<polygon points="-40.0,781.0 -9.4,784.7 21.2,788.9 51.8,793.2 82.3,797.6 112.9,802.1 143.4,806.5 174.0,810.2 204.3,816.4 234.0,824.6 263.6,833.4 293.1,842.4 322.6,851.6 351.9,861.1 381.2,871.0 410.2,881.4 438.9,892.8 466.9,905.8 492.9,922.3 516.3,942.5 538.6,963.7 561.4,984.5 583.2,1006.4 603.4,1029.7 619.2,1056.1 630.0,1085.0 646.2,1085.0 634.4,1055.9 618.3,1029.0 597.6,1005.4 574.5,984.2 550.3,964.3 526.6,943.8 503.0,923.1 476.6,906.2 448.0,893.0 418.8,881.7 389.1,871.2 359.3,861.2 329.4,851.5 299.4,842.1 269.4,833.0 239.2,824.2 208.9,816.0 178.1,809.8 146.8,806.5 115.7,802.6 84.6,798.0 53.4,793.5 22.3,789.1 -8.8,784.8 -40.0,781.0" fill="#bf0a57"/>
<polygon points="-40.0,781.0 -8.9,784.8 22.0,789.1 53.0,793.4 84.0,797.9 114.9,802.4 145.9,806.5 177.0,809.9 207.7,816.1 237.9,824.3 267.9,833.1 297.8,842.2 327.7,851.5 357.4,861.1 387.1,871.1 416.5,881.6 445.7,893.0 474.1,906.1 500.4,922.9 523.9,943.5 547.3,964.2 571.1,984.3 593.9,1005.7 614.5,1029.2 630.5,1055.9 642.0,1085.0 658.2,1085.0 645.7,1055.7 629.4,1028.5 608.2,1004.8 584.2,984.0 559.0,964.7 534.3,944.8 510.5,923.7 483.8,906.5 454.8,893.3 425.1,881.9 395.1,871.3 364.8,861.2 334.5,851.4 304.1,841.9 273.6,832.7 243.0,823.8 212.3,815.6 181.0,809.5 149.4,806.5 117.7,802.9 86.2,798.3 54.7,793.8 23.2,789.3 -8.4,784.8 -40.0,781.0" fill="#d80a58"/>
<polygon points="-40.0,781.0 -8.5,784.8 22.9,789.2 54.3,793.7 85.6,798.2 117.0,802.8 148.5,806.5 180.0,809.6 211.1,815.7 241.7,824.0 272.1,832.8 302.5,842.0 332.7,851.4 362.9,861.2 393.0,871.2 422.9,881.8 452.5,893.2 481.3,906.4 507.9,923.5 531.6,944.5 556.0,964.6 580.9,984.0 604.5,1005.0 625.5,1028.6 641.8,1055.8 654.0,1085.0 670.2,1085.0 657.1,1055.6 640.5,1027.9 618.9,1004.1 594.0,983.7 567.7,965.2 542.0,945.8 518.0,924.3 491.0,906.8 461.6,893.5 431.4,882.0 401.0,871.4 370.3,861.2 339.6,851.3 308.8,841.8 277.9,832.5 246.9,823.5 215.7,815.3 184.0,809.3 151.9,806.5 119.8,803.2 87.9,798.6 55.9,794.0 24.0,789.4 -8.0,784.9 -40.0,781.0" fill="#e11a5b"/>
<polygon points="-40.0,781.0 -8.1,784.9 23.7,789.4 55.5,793.9 87.3,798.5 119.1,803.1 151.0,806.5 183.0,809.4 214.5,815.4 245.5,823.6 276.4,832.6 307.2,841.8 337.8,851.4 368.4,861.2 398.9,871.3 429.2,882.0 459.2,893.4 488.4,906.7 515.4,924.1 539.3,945.5 564.6,965.0 590.6,983.8 615.1,1004.3 636.6,1028.1 653.1,1055.6 666.0,1085.0 682.2,1085.0 668.4,1055.4 651.6,1027.4 629.5,1003.4 603.7,983.5 576.4,965.6 549.7,946.8 525.5,924.9 498.2,907.0 468.4,893.7 437.8,882.2 406.9,871.5 375.8,861.2 344.7,851.2 313.5,841.6 282.2,832.2 250.7,823.2 219.1,814.9 187.0,809.0 154.4,806.5 121.9,803.5 89.5,798.9 57.2,794.3 24.8,789.5 -7.6,785.0 -40.0,781.0" fill="#ea2a5e"/>
<polygon points="-40.0,781.0 -7.7,784.9 24.5,789.5 56.7,794.2 88.9,798.8 121.2,803.4 153.5,806.5 186.0,809.1 217.9,815.1 249.4,823.3 280.7,832.3 311.8,841.6 342.9,851.3 373.9,861.2 404.8,871.4 435.5,882.1 466.0,893.6 495.6,906.9 522.8,924.7 547.0,946.5 573.3,965.4 600.3,983.6 625.8,1003.6 647.7,1027.6 664.4,1055.5 678.0,1085.0 690.0,1085.0 675.7,1055.3 658.8,1027.1 636.4,1003.0 610.0,983.3 582.0,965.9 554.7,947.5 530.3,925.3 502.8,907.2 472.8,893.8 441.9,882.3 410.7,871.5 379.4,861.2 348.0,851.2 316.5,841.5 284.9,832.0 253.2,823.0 221.3,814.7 188.9,808.8 156.1,806.5 123.2,803.8 90.6,799.2 58.0,794.4 25.4,789.6 -7.3,785.0 -40.0,781.0" fill="#f45a70"/>
<path d="M-10 757L0 760.500L72 794.500L0 775L-10 772Z" fill="#3d12a6"/>
<path d="M-10 772L0 775L72 794.500L126 805L126 803.500L66 793L0 786.500L-10 786Z" fill="#f7e2b8"/>
</g>
</svg>
<!-- desktop -->
<svg style="left:45px;top:44px;" width="42.1" height="30" viewBox="0 0 42.1 30"><defs><linearGradient id="dmg" x1="0" y1="0" x2="0" y2="1"><stop offset="0" stop-color="#6fd3f8"/><stop offset="0.5" stop-color="#5bb4f0"/><stop offset="1" stop-color="#4a96e6"/></linearGradient></defs>
<rect x="0.700" y="0.700" width="40.700" height="23.700" rx="0.800" fill="url(#dmg)" stroke="#11223c" stroke-width="1.400"/>
<path d="M21 1.400L41 1.400L41 24L12 24Z" fill="#fff" opacity=".07"/>
<rect x="15.800" y="25" width="10.200" height="3" fill="#9a7a88"/><rect x="8" y="28" width="26.200" height="1.800" rx="0.600" fill="#14243c"/></svg>
<div class="t" style="left:40.8px;top:85px;font-size:11.2px;line-height:11.2px;color:#e9fdfc;letter-spacing:0.12px;text-shadow:0 1px 2px rgba(0,60,70,.85),0 0 2px rgba(0,70,80,.6);-webkit-text-stroke:0.3px #e9fdfc;">Computer</div>
<svg style="left:45px;top:137.5px;" width="42.5" height="33.8" viewBox="0 0 42.5 33.8"><defs><linearGradient id="dhg" x1="0" y1="0" x2="0" y2="1"><stop offset="0" stop-color="#f6da4a"/><stop offset="1" stop-color="#ecc530"/></linearGradient></defs>
<path d="M1 3.200Q1 0.800 3.400 0.800H11.400Q12.600 0.800 13.400 1.800L14.200 2.800H32.600Q35 2.800 35 5.200V14H1Z" fill="#f7a61e"/>
<rect x="3.200" y="5" width="30" height="5" rx="0.800" fill="#fffbe6"/>
<rect x="0" y="7.400" width="42.500" height="26.400" rx="2.600" fill="url(#dhg)"/>
<path d="M20.400 24.400L32.200 13.400L41.600 22.200V33.200H33.600V28.600H30.800V33.200H23V24.400Z" fill="#eeb21e" opacity=".9"/></svg>
<div class="t" style="left:50.4px;top:183px;font-size:11.4px;line-height:11.4px;color:#e9fdfc;letter-spacing:-0.27px;text-shadow:0 1px 2px rgba(0,60,70,.85),0 0 2px rgba(0,70,80,.6);-webkit-text-stroke:0.3px #e9fdfc;">Home</div>
<svg style="left:50.2px;top:240.4px;" width="32.8" height="37.6" viewBox="0 0 32.8 37.6"><defs><linearGradient id="dtg" x1="0" y1="0" x2="1" y2="0"><stop offset="0" stop-color="#e9e7e7"/><stop offset="0.5" stop-color="#f7f6f6"/><stop offset="1" stop-color="#e4e2e2"/></linearGradient></defs>
<path d="M0.200 2.400L4.600 34.600Q5 37.600 8 37.600H24.800Q27.800 37.600 28.200 34.600L32.600 2.400Z" fill="url(#dtg)"/>
<ellipse cx="16.400" cy="2.600" rx="16.200" ry="2.600" fill="#dddada"/><ellipse cx="16.400" cy="2.800" rx="14.800" ry="1.800" fill="#e9e7e7"/>
<g fill="none" stroke="#4d4d4d" stroke-width="2.600"><path d="M11.700 18.600A5 5 0 0 1 15.300 15.400"/><path d="M18.300 15.600A5 5 0 0 1 21.200 19.600"/><path d="M20.600 22.600A5 5 0 0 1 16.400 25.200A5 5 0 0 1 12.200 22.800"/></g>
<path d="M18.600 13.400L21.600 16.200L17.600 17.400Z M22.600 20.600L21.800 24.600L18.800 22Z M10.200 22.200L11.200 18.200L14.200 21Z" fill="#4d4d4d"/></svg>
<div class="t" style="left:52.5px;top:288px;font-size:11.4px;line-height:11.4px;color:#e9fdfc;letter-spacing:-0.43px;text-shadow:0 1px 2px rgba(0,60,70,.85),0 0 2px rgba(0,70,80,.6);-webkit-text-stroke:0.3px #e9fdfc;">Trash</div>
<!-- kylin -->
<div class="abs" style="left:294px;top:133.5px;width:1140px;height:640px;background:#121213;border-radius:6px;box-shadow:0 4px 18px rgba(0,0,0,.45);"></div>
<svg style="left:303.7px;top:141.7px;" width="21" height="21" viewBox="0 0 21 21"><defs><linearGradient id="klg" x1="0" y1="0.15" x2="0.9" y2="1">
<stop offset="0" stop-color="#25c5ff"/><stop offset="0.2" stop-color="#2d80f8"/><stop offset="0.4" stop-color="#5a1cf0"/><stop offset="0.65" stop-color="#9a10f0"/><stop offset="1" stop-color="#d018e4"/></linearGradient></defs>
<path d="M0.400 20.600V10.500A10.100 10.100 0 1 1 10.500 20.600Z" fill="url(#klg)"/>
<circle cx="11" cy="10.400" r="6.200" fill="#180a3e"/>
<path d="M8.800 6.900L14.600 10.400L8.800 13.900Z" fill="#fff"/></svg>
<div class="t" style="left:331px;top:145px;font-size:15.2px;line-height:15.2px;color:#e6e6e6;letter-spacing:-0.35px;font-style:italic;">Kylin Video</div>
<div class="t" style="left:802.5px;top:147px;font-size:12.6px;line-height:12.6px;color:#e0e0e0;letter-spacing:0.14px;">Beautiful Nature.mpg</div>
<svg style="left:1301px;top:145px;" width="14" height="14" viewBox="0 0 14 14"><rect x="0.65" y="0.65" width="5" height="5" fill="none" stroke="#e4e4e4" stroke-width="1.3"/><rect x="8.35" y="0.65" width="5" height="5" fill="none" stroke="#e4e4e4" stroke-width="1.3"/><rect x="0.65" y="8.35" width="5" height="5" fill="none" stroke="#e4e4e4" stroke-width="1.3"/><rect x="8.35" y="8.35" width="5" height="5" fill="none" stroke="#e4e4e4" stroke-width="1.3"/></svg>
<svg style="left:1339px;top:151.7px;" width="10" height="2" viewBox="0 0 10 2"><line x1="0" y1="1" x2="10" y2="1" stroke="#e4e4e4" stroke-width="1.3" stroke-linecap="butt"/></svg>
<svg style="left:1375px;top:147px;" width="10" height="10" viewBox="0 0 10 10"><rect x="0.65" y="0.65" width="8.7" height="8.7" rx="0.3" fill="none" stroke="#e4e4e4" stroke-width="1.3"/></svg>
<svg style="left:1411px;top:147px;" width="10" height="10" viewBox="0 0 10 10"><line x1="0.3" y1="0.3" x2="9.7" y2="9.7" stroke="#e4e4e4" stroke-width="1.3" stroke-linecap="butt"/><line x1="9.7" y1="0.3" x2="0.3" y2="9.7" stroke="#e4e4e4" stroke-width="1.3" stroke-linecap="butt"/></svg>
<!-- whitedlg -->
<div class="abs" style="left:1400px;top:210px;width:160px;height:300px;background:#f7f7f7;box-shadow:0 3px 14px rgba(0,0,0,.4);"></div>
<svg style="left:1534.75px;top:221.75px;" width="10.5" height="10.5" viewBox="0 0 10.5 10.5"><line x1="0.3" y1="0.3" x2="10.2" y2="10.2" stroke="#1a1a1a" stroke-width="1" stroke-linecap="butt"/><line x1="10.2" y1="0.3" x2="0.3" y2="10.2" stroke="#1a1a1a" stroke-width="1" stroke-linecap="butt"/></svg>
<!-- settings -->
<div class="abs" style="left:1134px;top:249px;width:739px;height:729.5px;background:#0f0f0f;border-radius:6px;box-shadow:0 5px 22px rgba(0,0,0,.5);overflow:hidden;"><div class="abs" style="left:0;top:0;width:56px;height:730px;background:#181818"></div></div>
<div class="abs" style="left:1300px;top:258px;width:362px;height:28.6px;background:#262626;border-radius:5px;"></div>
<div class="t" style="left:1498px;top:266px;font-size:13.6px;line-height:13.6px;color:#8f8f8f;letter-spacing:-0.02px;">Search</div>
<svg style="left:1733.8px;top:273.2px;" width="13" height="2" viewBox="0 0 13 2"><line x1="0" y1="1" x2="13" y2="1" stroke="#ebebeb" stroke-width="1.5" stroke-linecap="butt"/></svg>
<svg style="left:1788.6px;top:267.9px;" width="13" height="13" viewBox="0 0 13 13"><rect x="0.75" y="0.75" width="11.5" height="11.5" rx="1.2" fill="none" stroke="#ebebeb" stroke-width="1.5"/></svg>
<svg style="left:1842.7px;top:268.5px;" width="13" height="13" viewBox="0 0 13 13"><line x1="0.3" y1="0.3" x2="12.7" y2="12.7" stroke="#ebebeb" stroke-width="1.5" stroke-linecap="butt"/><line x1="12.7" y1="0.3" x2="0.3" y2="12.7" stroke="#ebebeb" stroke-width="1.5" stroke-linecap="butt"/></svg>
<svg style="left:1480px;top:372px;" width="138" height="163" viewBox="0 0 138 163"><defs><clipPath id="pvc"><rect width="138" height="163" rx="5"/></clipPath>
<linearGradient id="pvp" x1="0" y1="0" x2="1" y2="0"><stop offset="0" stop-color="#d98a98"/><stop offset="0.5" stop-color="#ee93a0"/><stop offset="1" stop-color="#f29aa6"/></linearGradient></defs>
<g clip-path="url(#pvc)"><rect width="138" height="163" fill="#0e826d"/>
<path d="M0 78C20 58 50 52 70 78C92 106 108 140 106 170L0 170Z" fill="#a94653"/>
<path d="M0 80L81 144L60 170L0 170Z" fill="url(#pvp)"/>
<rect y="151.5" width="138" height="12" fill="#3d3d3d" opacity=".82"/></g></svg>
<div class="abs" style="left:1300px;top:556px;width:545px;height:45.6px;background:#161616;border-radius:7px;"></div>
<div class="abs" style="left:1440px;top:564.5px;width:133.5px;height:28.4px;background:#1f1f1f;border-radius:4px;"></div>
<svg style="left:1556.8px;top:577.2px;" width="8.4" height="4.2" viewBox="0 0 8.4 4.2"><polyline points="0,0 4.2,4.2 8.4,0" fill="none" stroke="#c4c4c4" stroke-width="1.3" stroke-linecap="round" stroke-linejoin="round"/></svg>
<div class="t" style="left:1618.3px;top:573px;font-size:13.6px;line-height:13.6px;color:#ececec;letter-spacing:-0.11px;">Picture Options</div>
<div class="abs" style="left:1720.2px;top:564.5px;width:110px;height:28.4px;background:#1f1f1f;border-radius:4px;"></div>
<div class="t" style="left:1727.6px;top:573px;font-size:13.6px;line-height:13.6px;color:#ececec;letter-spacing:-0.04px;">Wallpaper</div>
<svg style="left:1813.8px;top:577.2px;" width="8.4" height="4.2" viewBox="0 0 8.4 4.2"><polyline points="0,0 4.2,4.2 8.4,0" fill="none" stroke="#c4c4c4" stroke-width="1.3" stroke-linecap="round" stroke-linejoin="round"/></svg>
<svg style="left:1510px;top:623.4px;" width="150" height="99" viewBox="0 0 150 99"><defs><clipPath id="tcn"><rect width="150" height="99" rx="5"/></clipPath>
<linearGradient id="tn1" x1="0" y1="0" x2="1" y2="1"><stop offset="0" stop-color="#176a9a"/><stop offset="0.35" stop-color="#14529a"/><stop offset="0.7" stop-color="#0f3a84"/><stop offset="1" stop-color="#0b2a6a"/></linearGradient>
<radialGradient id="tn2" cx="0.3" cy="0.2" r="0.5"><stop offset="0" stop-color="#1f8ab4" stop-opacity=".75"/><stop offset="1" stop-color="#1f8ab4" stop-opacity="0"/></radialGradient>
<radialGradient id="tn3" cx="0.12" cy="0.6" r="0.3"><stop offset="0" stop-color="#3a4fb4" stop-opacity=".6"/><stop offset="1" stop-color="#3a4fb4" stop-opacity="0"/></radialGradient>
</defs><g clip-path="url(#tcn)">
<rect width="150" height="99" fill="url(#tn1)"/><rect width="150" height="99" fill="url(#tn2)"/><rect width="150" height="99" fill="url(#tn3)"/>
<g stroke="#d9c48a" stroke-width=".7" fill="none" opacity=".9">
<path d="M120 76L107 76M126 76L139 76M111 70L135 70M113 64L133 64M116 58L130 58M119 54L127 54"/>
<path d="M108 76L113 70L112 64L116 58L119 54L123 50L127 54L130 58L134 64L133 70L138 76Z"/>
<line x1="123" y1="50" x2="123" y2="46"/></g>
<line x1="94" y1="76.3" x2="150" y2="76.3" stroke="#e8b860" stroke-width=".8"/>
<circle cx="123" cy="75" r="2.2" fill="#fff3c0"/><circle cx="123" cy="47" r="1" fill="#ffd870"/>
<g stroke="#8aa6d8" stroke-width=".5" opacity=".45"><path d="M108 80H138M110 83H136M112 86H134M114 89H132"/></g>
<circle cx="68" cy="28" r=".9" fill="#cfe6ff"/><circle cx="28" cy="66" r=".7" fill="#cfe6ff"/><circle cx="96" cy="8" r=".6" fill="#cfe6ff"/>
</g></svg>
<svg style="left:1674.4px;top:623.4px;" width="150" height="99" viewBox="0 0 150 99"><defs><clipPath id="tcf"><rect width="150" height="99" rx="5"/></clipPath>
<radialGradient id="tf1" cx="0.1" cy="0.2" r="0.45"><stop offset="0" stop-color="#2f6a1c"/><stop offset="1" stop-color="#2f6a1c" stop-opacity="0"/></radialGradient>
<radialGradient id="tf2" cx="0.95" cy="0.5" r="0.3"><stop offset="0" stop-color="#245f18"/><stop offset="1" stop-color="#2e7a1e" stop-opacity="0"/></radialGradient>
<radialGradient id="tf3" cx="0.7" cy="0.1" r="0.35"><stop offset="0" stop-color="#1f5a16"/><stop offset="1" stop-color="#1f5a16" stop-opacity="0"/></radialGradient>
<filter id="tfb"><feGaussianBlur stdDeviation="1.1"/></filter>
</defs><g clip-path="url(#tcf)">
<rect width="150" height="99" fill="#0b1c07"/><rect width="150" height="99" fill="url(#tf1)"/><rect width="150" height="99" fill="url(#tf2)"/><rect width="150" height="99" fill="url(#tf3)"/>
<path d="M0 40C20 55 40 70 62 99" stroke="#16380e" stroke-width="3" fill="none"/><path d="M4 70L14 99" stroke="#3d7a1c" stroke-width="1.6" fill="none"/>
<g><line x1="72" y1="8" x2="82.95" y2="8.91" stroke="#e2c81a" stroke-width="3.52" stroke-linecap="round"/><line x1="72" y1="8" x2="81.27" y2="13.04" stroke="#e2c81a" stroke-width="3.52" stroke-linecap="round"/><line x1="72" y1="8" x2="75.55" y2="16.85" stroke="#e2c81a" stroke-width="3.52" stroke-linecap="round"/><line x1="72" y1="8" x2="71.76" y2="17.35" stroke="#e2c81a" stroke-width="3.52" stroke-linecap="round"/><line x1="72" y1="8" x2="65.05" y2="15.24" stroke="#e2c81a" stroke-width="3.52" stroke-linecap="round"/><line x1="72" y1="8" x2="61.93" y2="11.76" stroke="#e2c81a" stroke-width="3.52" stroke-linecap="round"/><line x1="72" y1="8" x2="61" y2="7.84" stroke="#e2c81a" stroke-width="3.52" stroke-linecap="round"/><line x1="72" y1="8" x2="63.42" y2="2.15" stroke="#e2c81a" stroke-width="3.52" stroke-linecap="round"/><line x1="72" y1="8" x2="66.61" y2="-0.15" stroke="#e2c81a" stroke-width="3.52" stroke-linecap="round"/><line x1="72" y1="8" x2="73.43" y2="-1.27" stroke="#e2c81a" stroke-width="3.52" stroke-linecap="round"/><line x1="72" y1="8" x2="77.7" y2="0" stroke="#e2c81a" stroke-width="3.52" stroke-linecap="round"/><line x1="72" y1="8" x2="81.67" y2="3.55" stroke="#e2c81a" stroke-width="3.52" stroke-linecap="round"/><circle cx="72" cy="8" r="3.3" fill="#c9a010"/></g><g><line x1="66" y1="26" x2="74.93" y2="26.97" stroke="#d7bb17" stroke-width="2.88" stroke-linecap="round"/><line x1="66" y1="26" x2="72.45" y2="31.33" stroke="#d7bb17" stroke-width="2.88" stroke-linecap="round"/><line x1="66" y1="26" x2="70.21" y2="32.76" stroke="#d7bb17" stroke-width="2.88" stroke-linecap="round"/><line x1="66" y1="26" x2="65.4" y2="33.63" stroke="#d7bb17" stroke-width="2.88" stroke-linecap="round"/><line x1="66" y1="26" x2="60.12" y2="31.79" stroke="#d7bb17" stroke-width="2.88" stroke-linecap="round"/><line x1="66" y1="26" x2="57.26" y2="27.81" stroke="#d7bb17" stroke-width="2.88" stroke-linecap="round"/><line x1="66" y1="26" x2="57.13" y2="24.68" stroke="#d7bb17" stroke-width="2.88" stroke-linecap="round"/><line x1="66" y1="26" x2="58.8" y2="21.42" stroke="#d7bb17" stroke-width="2.88" stroke-linecap="round"/><line x1="66" y1="26" x2="63.94" y2="18.55" stroke="#d7bb17" stroke-width="2.88" stroke-linecap="round"/><line x1="66" y1="26" x2="66.13" y2="18.35" stroke="#d7bb17" stroke-width="2.88" stroke-linecap="round"/><line x1="66" y1="26" x2="72.34" y2="20.57" stroke="#d7bb17" stroke-width="2.88" stroke-linecap="round"/><line x1="66" y1="26" x2="74.16" y2="22.76" stroke="#d7bb17" stroke-width="2.88" stroke-linecap="round"/><circle cx="66" cy="26" r="2.7" fill="#c9a010"/></g><g><line x1="50" y1="38" x2="60.99" y2="38.4" stroke="#ecd51e" stroke-width="3.52" stroke-linecap="round"/><line x1="50" y1="38" x2="59.33" y2="42.96" stroke="#ecd51e" stroke-width="3.52" stroke-linecap="round"/><line x1="50" y1="38" x2="54.6" y2="46.49" stroke="#ecd51e" stroke-width="3.52" stroke-linecap="round"/><line x1="50" y1="38" x2="47.33" y2="47.07" stroke="#ecd51e" stroke-width="3.52" stroke-linecap="round"/><line x1="50" y1="38" x2="43.99" y2="45.83" stroke="#ecd51e" stroke-width="3.52" stroke-linecap="round"/><line x1="50" y1="38" x2="39.66" y2="41.2" stroke="#ecd51e" stroke-width="3.52" stroke-linecap="round"/><line x1="50" y1="38" x2="39.2" y2="36.22" stroke="#ecd51e" stroke-width="3.52" stroke-linecap="round"/><line x1="50" y1="38" x2="41.15" y2="32.45" stroke="#ecd51e" stroke-width="3.52" stroke-linecap="round"/><line x1="50" y1="38" x2="46.13" y2="29.25" stroke="#ecd51e" stroke-width="3.52" stroke-linecap="round"/><line x1="50" y1="38" x2="50.21" y2="28.65" stroke="#ecd51e" stroke-width="3.52" stroke-linecap="round"/><line x1="50" y1="38" x2="55.67" y2="29.99" stroke="#ecd51e" stroke-width="3.52" stroke-linecap="round"/><line x1="50" y1="38" x2="59.85" y2="33.83" stroke="#ecd51e" stroke-width="3.52" stroke-linecap="round"/><circle cx="50" cy="38" r="3.3" fill="#c9a010"/></g><g><line x1="74" y1="44" x2="83.79" y2="45.72" stroke="#f0d91f" stroke-width="3.2" stroke-linecap="round"/><line x1="74" y1="44" x2="81.95" y2="49.16" stroke="#f0d91f" stroke-width="3.2" stroke-linecap="round"/><line x1="74" y1="44" x2="78.16" y2="51.73" stroke="#f0d91f" stroke-width="3.2" stroke-linecap="round"/><line x1="74" y1="44" x2="72.25" y2="52.37" stroke="#f0d91f" stroke-width="3.2" stroke-linecap="round"/><line x1="74" y1="44" x2="67.87" y2="50.72" stroke="#f0d91f" stroke-width="3.2" stroke-linecap="round"/><line x1="74" y1="44" x2="64.93" y2="47.57" stroke="#f0d91f" stroke-width="3.2" stroke-linecap="round"/><line x1="74" y1="44" x2="64.28" y2="41.99" stroke="#f0d91f" stroke-width="3.2" stroke-linecap="round"/><line x1="74" y1="44" x2="66.57" y2="38.31" stroke="#f0d91f" stroke-width="3.2" stroke-linecap="round"/><line x1="74" y1="44" x2="69.65" y2="36.35" stroke="#f0d91f" stroke-width="3.2" stroke-linecap="round"/><line x1="74" y1="44" x2="75.71" y2="35.63" stroke="#f0d91f" stroke-width="3.2" stroke-linecap="round"/><line x1="74" y1="44" x2="80.3" y2="37.4" stroke="#f0d91f" stroke-width="3.2" stroke-linecap="round"/><line x1="74" y1="44" x2="83.66" y2="41.81" stroke="#f0d91f" stroke-width="3.2" stroke-linecap="round"/><circle cx="74" cy="44" r="3" fill="#c9a010"/></g><g><line x1="58" y1="60" x2="68.74" y2="62.03" stroke="#ead21d" stroke-width="3.52" stroke-linecap="round"/><line x1="58" y1="60" x2="67.02" y2="65.36" stroke="#ead21d" stroke-width="3.52" stroke-linecap="round"/><line x1="58" y1="60" x2="60.5" y2="69.1" stroke="#ead21d" stroke-width="3.52" stroke-linecap="round"/><line x1="58" y1="60" x2="57.61" y2="69.34" stroke="#ead21d" stroke-width="3.52" stroke-linecap="round"/><line x1="58" y1="60" x2="51.35" y2="67.45" stroke="#ead21d" stroke-width="3.52" stroke-linecap="round"/><line x1="58" y1="60" x2="47.48" y2="62.73" stroke="#ead21d" stroke-width="3.52" stroke-linecap="round"/><line x1="58" y1="60" x2="47.01" y2="59.57" stroke="#ead21d" stroke-width="3.52" stroke-linecap="round"/><line x1="58" y1="60" x2="49.38" y2="54.19" stroke="#ead21d" stroke-width="3.52" stroke-linecap="round"/><line x1="58" y1="60" x2="52.61" y2="51.85" stroke="#ead21d" stroke-width="3.52" stroke-linecap="round"/><line x1="58" y1="60" x2="60.19" y2="50.84" stroke="#ead21d" stroke-width="3.52" stroke-linecap="round"/><line x1="58" y1="60" x2="65.52" y2="53.18" stroke="#ead21d" stroke-width="3.52" stroke-linecap="round"/><line x1="58" y1="60" x2="68.33" y2="56.78" stroke="#ead21d" stroke-width="3.52" stroke-linecap="round"/><circle cx="58" cy="60" r="3.3" fill="#c9a010"/></g><g><line x1="90" y1="34" x2="99.66" y2="36.21" stroke="#d9bd18" stroke-width="3.2" stroke-linecap="round"/><line x1="90" y1="34" x2="98.15" y2="38.92" stroke="#d9bd18" stroke-width="3.2" stroke-linecap="round"/><line x1="90" y1="34" x2="93.1" y2="42.08" stroke="#d9bd18" stroke-width="3.2" stroke-linecap="round"/><line x1="90" y1="34" x2="88.23" y2="42.37" stroke="#d9bd18" stroke-width="3.2" stroke-linecap="round"/><line x1="90" y1="34" x2="83.58" y2="40.51" stroke="#d9bd18" stroke-width="3.2" stroke-linecap="round"/><line x1="90" y1="34" x2="80.74" y2="37.21" stroke="#d9bd18" stroke-width="3.2" stroke-linecap="round"/><line x1="90" y1="34" x2="80.32" y2="31.88" stroke="#d9bd18" stroke-width="3.2" stroke-linecap="round"/><line x1="90" y1="34" x2="83.08" y2="27.86" stroke="#d9bd18" stroke-width="3.2" stroke-linecap="round"/><line x1="90" y1="34" x2="86.28" y2="26.11" stroke="#d9bd18" stroke-width="3.2" stroke-linecap="round"/><line x1="90" y1="34" x2="91.98" y2="25.67" stroke="#d9bd18" stroke-width="3.2" stroke-linecap="round"/><line x1="90" y1="34" x2="95.16" y2="26.72" stroke="#d9bd18" stroke-width="3.2" stroke-linecap="round"/><line x1="90" y1="34" x2="99.51" y2="31.38" stroke="#d9bd18" stroke-width="3.2" stroke-linecap="round"/><circle cx="90" cy="34" r="3" fill="#c9a010"/></g><g filter="url(#tfb)"><line x1="97" y1="52" x2="105.83" y2="53.48" stroke="#b89d14" stroke-width="2.88" stroke-linecap="round"/><line x1="97" y1="52" x2="103.13" y2="57.6" stroke="#b89d14" stroke-width="2.88" stroke-linecap="round"/><line x1="97" y1="52" x2="99.46" y2="59.36" stroke="#b89d14" stroke-width="2.88" stroke-linecap="round"/><line x1="97" y1="52" x2="96.23" y2="59.62" stroke="#b89d14" stroke-width="2.88" stroke-linecap="round"/><line x1="97" y1="52" x2="91.63" y2="58.14" stroke="#b89d14" stroke-width="2.88" stroke-linecap="round"/><line x1="97" y1="52" x2="88.47" y2="54.43" stroke="#b89d14" stroke-width="2.88" stroke-linecap="round"/><line x1="97" y1="52" x2="88" y2="51.95" stroke="#b89d14" stroke-width="2.88" stroke-linecap="round"/><line x1="97" y1="52" x2="89.9" y2="47.3" stroke="#b89d14" stroke-width="2.88" stroke-linecap="round"/><line x1="97" y1="52" x2="92.9" y2="45.19" stroke="#b89d14" stroke-width="2.88" stroke-linecap="round"/><line x1="97" y1="52" x2="97.32" y2="44.35" stroke="#b89d14" stroke-width="2.88" stroke-linecap="round"/><line x1="97" y1="52" x2="101.64" y2="45.44" stroke="#b89d14" stroke-width="2.88" stroke-linecap="round"/><line x1="97" y1="52" x2="105.62" y2="49.79" stroke="#b89d14" stroke-width="2.88" stroke-linecap="round"/><circle cx="97" cy="52" r="2.7" fill="#c9a010"/></g><g filter="url(#tfb)"><line x1="82" y1="72" x2="91.99" y2="72.33" stroke="#a88f14" stroke-width="3.2" stroke-linecap="round"/><line x1="82" y1="72" x2="90.27" y2="76.78" stroke="#a88f14" stroke-width="3.2" stroke-linecap="round"/><line x1="82" y1="72" x2="85.95" y2="79.81" stroke="#a88f14" stroke-width="3.2" stroke-linecap="round"/><line x1="82" y1="72" x2="79.42" y2="80.21" stroke="#a88f14" stroke-width="3.2" stroke-linecap="round"/><line x1="82" y1="72" x2="76.79" y2="79.26" stroke="#a88f14" stroke-width="3.2" stroke-linecap="round"/><line x1="82" y1="72" x2="72.75" y2="75.22" stroke="#a88f14" stroke-width="3.2" stroke-linecap="round"/><line x1="82" y1="72" x2="72.14" y2="70.61" stroke="#a88f14" stroke-width="3.2" stroke-linecap="round"/><line x1="82" y1="72" x2="74.95" y2="65.97" stroke="#a88f14" stroke-width="3.2" stroke-linecap="round"/><line x1="82" y1="72" x2="79.26" y2="63.83" stroke="#a88f14" stroke-width="3.2" stroke-linecap="round"/><line x1="82" y1="72" x2="84.56" y2="63.78" stroke="#a88f14" stroke-width="3.2" stroke-linecap="round"/><line x1="82" y1="72" x2="87.71" y2="65.02" stroke="#a88f14" stroke-width="3.2" stroke-linecap="round"/><line x1="82" y1="72" x2="91.21" y2="68.7" stroke="#a88f14" stroke-width="3.2" stroke-linecap="round"/><circle cx="82" cy="72" r="3" fill="#c9a010"/></g><g filter="url(#tfb)"><line x1="108" y1="68" x2="116.95" y2="68.82" stroke="#a48a12" stroke-width="2.88" stroke-linecap="round"/><line x1="108" y1="68" x2="114.34" y2="73.43" stroke="#a48a12" stroke-width="2.88" stroke-linecap="round"/><line x1="108" y1="68" x2="110.11" y2="75.44" stroke="#a48a12" stroke-width="2.88" stroke-linecap="round"/><line x1="108" y1="68" x2="107.59" y2="75.64" stroke="#a48a12" stroke-width="2.88" stroke-linecap="round"/><line x1="108" y1="68" x2="103.09" y2="74.41" stroke="#a48a12" stroke-width="2.88" stroke-linecap="round"/><line x1="108" y1="68" x2="99.91" y2="71.36" stroke="#a48a12" stroke-width="2.88" stroke-linecap="round"/><line x1="108" y1="68" x2="99.02" y2="67.46" stroke="#a48a12" stroke-width="2.88" stroke-linecap="round"/><line x1="108" y1="68" x2="100.94" y2="63.25" stroke="#a48a12" stroke-width="2.88" stroke-linecap="round"/><line x1="108" y1="68" x2="104.94" y2="60.81" stroke="#a48a12" stroke-width="2.88" stroke-linecap="round"/><line x1="108" y1="68" x2="108.71" y2="60.37" stroke="#a48a12" stroke-width="2.88" stroke-linecap="round"/><line x1="108" y1="68" x2="112.51" y2="61.38" stroke="#a48a12" stroke-width="2.88" stroke-linecap="round"/><line x1="108" y1="68" x2="116.3" y2="65.04" stroke="#a48a12" stroke-width="2.88" stroke-linecap="round"/><circle cx="108" cy="68" r="2.7" fill="#c9a010"/></g><g><line x1="38" y1="96" x2="47.94" y2="96.94" stroke="#dcc21a" stroke-width="3.2" stroke-linecap="round"/><line x1="38" y1="96" x2="45.69" y2="101.43" stroke="#dcc21a" stroke-width="3.2" stroke-linecap="round"/><line x1="38" y1="96" x2="40.35" y2="104.26" stroke="#dcc21a" stroke-width="3.2" stroke-linecap="round"/><line x1="38" y1="96" x2="35.94" y2="104.32" stroke="#dcc21a" stroke-width="3.2" stroke-linecap="round"/><line x1="38" y1="96" x2="31.73" y2="102.62" stroke="#dcc21a" stroke-width="3.2" stroke-linecap="round"/><line x1="38" y1="96" x2="28.57" y2="98.82" stroke="#dcc21a" stroke-width="3.2" stroke-linecap="round"/><line x1="38" y1="96" x2="28.21" y2="94.29" stroke="#dcc21a" stroke-width="3.2" stroke-linecap="round"/><line x1="38" y1="96" x2="29.42" y2="91.63" stroke="#dcc21a" stroke-width="3.2" stroke-linecap="round"/><line x1="38" y1="96" x2="35.49" y2="87.77" stroke="#dcc21a" stroke-width="3.2" stroke-linecap="round"/><line x1="38" y1="96" x2="40.32" y2="87.73" stroke="#dcc21a" stroke-width="3.2" stroke-linecap="round"/><line x1="38" y1="96" x2="45.07" y2="89.99" stroke="#dcc21a" stroke-width="3.2" stroke-linecap="round"/><line x1="38" y1="96" x2="47.6" y2="93.62" stroke="#dcc21a" stroke-width="3.2" stroke-linecap="round"/><circle cx="38" cy="96" r="3" fill="#c9a010"/></g><g><line x1="68" y1="98" x2="76.94" y2="98.9" stroke="#cbb018" stroke-width="2.88" stroke-linecap="round"/><line x1="68" y1="98" x2="75.2" y2="102.59" stroke="#cbb018" stroke-width="2.88" stroke-linecap="round"/><line x1="68" y1="98" x2="72.26" y2="104.74" stroke="#cbb018" stroke-width="2.88" stroke-linecap="round"/><line x1="68" y1="98" x2="66.3" y2="105.51" stroke="#cbb018" stroke-width="2.88" stroke-linecap="round"/><line x1="68" y1="98" x2="63.36" y2="104.55" stroke="#cbb018" stroke-width="2.88" stroke-linecap="round"/><line x1="68" y1="98" x2="60.12" y2="101.69" stroke="#cbb018" stroke-width="2.88" stroke-linecap="round"/><line x1="68" y1="98" x2="59.02" y2="97.52" stroke="#cbb018" stroke-width="2.88" stroke-linecap="round"/><line x1="68" y1="98" x2="60.43" y2="93.86" stroke="#cbb018" stroke-width="2.88" stroke-linecap="round"/><line x1="68" y1="98" x2="64.32" y2="91.02" stroke="#cbb018" stroke-width="2.88" stroke-linecap="round"/><line x1="68" y1="98" x2="68.14" y2="90.35" stroke="#cbb018" stroke-width="2.88" stroke-linecap="round"/><line x1="68" y1="98" x2="72.5" y2="91.38" stroke="#cbb018" stroke-width="2.88" stroke-linecap="round"/><line x1="68" y1="98" x2="75.99" y2="94.48" stroke="#cbb018" stroke-width="2.88" stroke-linecap="round"/><circle cx="68" cy="98" r="2.7" fill="#c9a010"/></g><g filter="url(#tfb)"><line x1="100" y1="96" x2="108" y2="96.21" stroke="#9f8612" stroke-width="2.56" stroke-linecap="round"/><line x1="100" y1="96" x2="106.45" y2="100.02" stroke="#9f8612" stroke-width="2.56" stroke-linecap="round"/><line x1="100" y1="96" x2="103.95" y2="101.91" stroke="#9f8612" stroke-width="2.56" stroke-linecap="round"/><line x1="100" y1="96" x2="97.93" y2="102.57" stroke="#9f8612" stroke-width="2.56" stroke-linecap="round"/><line x1="100" y1="96" x2="94.8" y2="101.17" stroke="#9f8612" stroke-width="2.56" stroke-linecap="round"/><line x1="100" y1="96" x2="92.9" y2="99.13" stroke="#9f8612" stroke-width="2.56" stroke-linecap="round"/><line x1="100" y1="96" x2="92.02" y2="95.49" stroke="#9f8612" stroke-width="2.56" stroke-linecap="round"/><line x1="100" y1="96" x2="93.53" y2="92.01" stroke="#9f8612" stroke-width="2.56" stroke-linecap="round"/><line x1="100" y1="96" x2="96.78" y2="89.78" stroke="#9f8612" stroke-width="2.56" stroke-linecap="round"/><line x1="100" y1="96" x2="100.29" y2="89.2" stroke="#9f8612" stroke-width="2.56" stroke-linecap="round"/><line x1="100" y1="96" x2="105.62" y2="91.16" stroke="#9f8612" stroke-width="2.56" stroke-linecap="round"/><line x1="100" y1="96" x2="107.8" y2="94.48" stroke="#9f8612" stroke-width="2.56" stroke-linecap="round"/><circle cx="100" cy="96" r="2.4" fill="#c9a010"/></g><g filter="url(#tfb)"><line x1="110" y1="84" x2="117.92" y2="84.95" stroke="#957d10" stroke-width="2.56" stroke-linecap="round"/><line x1="110" y1="84" x2="116.28" y2="88.22" stroke="#957d10" stroke-width="2.56" stroke-linecap="round"/><line x1="110" y1="84" x2="113.82" y2="89.97" stroke="#957d10" stroke-width="2.56" stroke-linecap="round"/><line x1="110" y1="84" x2="109.75" y2="90.8" stroke="#957d10" stroke-width="2.56" stroke-linecap="round"/><line x1="110" y1="84" x2="105.31" y2="89.51" stroke="#957d10" stroke-width="2.56" stroke-linecap="round"/><line x1="110" y1="84" x2="102.78" y2="86.92" stroke="#957d10" stroke-width="2.56" stroke-linecap="round"/><line x1="110" y1="84" x2="102.25" y2="82.33" stroke="#957d10" stroke-width="2.56" stroke-linecap="round"/><line x1="110" y1="84" x2="103.27" y2="80.32" stroke="#957d10" stroke-width="2.56" stroke-linecap="round"/><line x1="110" y1="84" x2="106.05" y2="78.09" stroke="#957d10" stroke-width="2.56" stroke-linecap="round"/><line x1="110" y1="84" x2="112.25" y2="77.47" stroke="#957d10" stroke-width="2.56" stroke-linecap="round"/><line x1="110" y1="84" x2="115.04" y2="78.72" stroke="#957d10" stroke-width="2.56" stroke-linecap="round"/><line x1="110" y1="84" x2="117.1" y2="80.86" stroke="#957d10" stroke-width="2.56" stroke-linecap="round"/><circle cx="110" cy="84" r="2.4" fill="#c9a010"/></g><ellipse cx="102" cy="32" rx="7" ry="4" fill="#6a3a12" transform="rotate(-12 102 32)"/><ellipse cx="105" cy="21" rx="3" ry="8" fill="#8a8270" opacity=".55" transform="rotate(20 105 21)"/><path d="M98 30l10-1M99 33l9-1" stroke="#e0a020" stroke-width="1"/></g></svg>
<svg style="left:1510px;top:735.5px;" width="150" height="99" viewBox="0 0 150 99"><defs><clipPath id="tcm"><rect width="150" height="99" rx="5"/></clipPath>
<linearGradient id="tm1" x1="0" y1="0" x2="0" y2="1"><stop offset="0" stop-color="#3fb0c2"/><stop offset="0.2" stop-color="#74cbc6"/><stop offset="0.36" stop-color="#e6e2a6"/><stop offset="0.5" stop-color="#f6d88e"/><stop offset="1" stop-color="#f1c98a"/></linearGradient>
</defs><g clip-path="url(#tcm)">
<rect width="150" height="99" fill="url(#tm1)"/>
<circle cx="98.500" cy="41.500" r="2.400" fill="#fff6d4"/>
<path d="M0 26L8 40L14 46L20 46L28 34L40 28L50 17L58 16L66 30L74 42L84 48L98 52L108 44L118 40L128 30L138 22L150 20V99H0Z" fill="#4ba9ae"/>
<path d="M0 54L10 52L20 56L34 46L44 52L56 48L68 42L78 50L92 54L104 60L114 52L128 44L138 40L150 36V99H0Z" fill="#359199"/>
<circle cx="30" cy="44" r="4.600" fill="#52c2b0" opacity=".7"/>
<path d="M0 64L2.4 60.3L4.9 64.0L6.7 57.2L8.6 64.0L10.7 58.5L12.7 64.0L15.1 57.7L17.5 64.0L19.1 60.5L20.7 64.0L22.8 56.8L24.8 64.0L26.4 57.2L28.0 64.0L30.3 58.8L32.7 64.0L35.2 59.9L37.7 64.0L39.4 56.5L41.0 64.0L43.1 60.9L45.3 64.0L47.3 56.3L49.2 64.0L51.3 59.9L53.3 64.0L55.1 60.9L56.9 64.0L59.0 58.8L61.1 64.0L63.0 59.8L64.8 64.0L66.8 59.9L68.9 64.0L70.5 59.6L72.2 64.0L74.3 56.8L76.5 64.0L78.2 57.8L80.0 64.0L82.5 56.0L85.0 64.0L86.9 60.4L88.8 64.0L91.1 57.4L93.4 64.0L95.5 56.3L97.5 64.0L99.8 56.8L102.0 64.0L104.2 59.5L106.4 64.0L108.8 56.6L111.3 64.0L113.5 58.5L115.7 64.0L117.5 60.8L119.4 64.0L121.4 57.0L123.4 64.0L125.5 60.1L127.7 64.0L130.0 57.5L132.2 64.0L134.3 59.1L136.3 64.0L138.7 58.5L141.1 64.0L143.1 58.4L145.1 64.0L146.7 58.6L148.3 64.0L150.6 60.8L152.9 64.0L150 99H0Z" fill="#2d7c86"/>
<path d="M0 82L3.5 66.4L7.0 82.0L9.3 75.4L11.6 82.0L14.9 67.6L18.1 82.0L20.7 69.3L23.3 82.0L26.3 69.9L29.4 82.0L31.8 70.2L34.2 82.0L37.0 71.7L39.7 82.0L43.3 68.8L46.8 82.0L49.8 66.5L52.7 82.0L55.3 71.6L57.9 82.0L60.1 75.6L62.3 82.0L65.0 71.4L67.6 82.0L71.0 72.2L74.5 82.0L77.4 70.7L80.4 82.0L82.6 73.6L84.9 82.0L87.3 72.7L89.7 82.0L93.2 70.9L96.8 82.0L99.3 69.3L101.7 82.0L105.0 67.1L108.3 82.0L111.7 68.7L115.2 82.0L118.5 68.4L121.8 82.0L125.3 72.5L128.9 82.0L131.3 66.4L133.7 82.0L136.9 68.5L140.1 82.0L143.0 71.4L145.9 82.0L149.4 71.1L152.9 82.0L150 99H0Z" fill="#256c77"/>
<path d="M0 100L2.7 93.3L5.4 100.0L8.1 92.4L10.9 100.0L13.0 90.6L15.0 100.0L18.1 94.9L21.1 100.0L23.4 93.2L25.7 100.0L28.3 88.0L30.9 100.0L33.5 89.1L36.1 100.0L38.3 90.5L40.5 100.0L43.5 90.6L46.6 100.0L49.6 91.3L52.5 100.0L54.6 90.3L56.6 100.0L59.4 89.7L62.1 100.0L64.2 92.9L66.2 100.0L68.8 88.9L71.4 100.0L74.5 90.0L77.6 100.0L80.7 90.0L83.9 100.0L86.9 92.2L89.9 100.0L93.0 91.9L96.2 100.0L98.3 88.8L100.5 100.0L102.7 94.0L105.0 100.0L107.5 88.2L110.1 100.0L112.5 90.6L114.8 100.0L117.3 91.4L119.8 100.0L122.5 92.5L125.3 100.0L128.4 90.9L131.5 100.0L134.7 90.2L137.9 100.0L141.1 89.0L144.3 100.0L146.5 90.3L148.7 100.0L151.9 89.0L155.2 100.0L150 99H0Z" fill="#1f5f6a"/>
<path d="M102 60C97 66 96 72 100 78C104 84 102 90 92 99L106 99C114 92 114 86 109 79C105 73 101 67 102 60Z" fill="#a9ddcf"/>
</g></svg>
<svg style="left:1674.8px;top:735.5px;" width="150" height="99" viewBox="0 0 150 99"><defs><clipPath id="tcs"><rect width="150" height="99" rx="5"/></clipPath>
<linearGradient id="ts1" x1="0" y1="0" x2="0" y2="1"><stop offset="0" stop-color="#e8fdff"/><stop offset="0.2" stop-color="#35d6ea"/><stop offset="0.5" stop-color="#1b9fd0"/><stop offset="0.62" stop-color="#7be0ea"/><stop offset="0.75" stop-color="#f0b070"/><stop offset="1" stop-color="#8ee6f2"/></linearGradient>
<linearGradient id="ts2" x1="0" y1="0" x2="1" y2="1"><stop offset="0" stop-color="#6fb8c0"/><stop offset="1" stop-color="#1e5a78"/></linearGradient>
<filter id="tsb" x="-50%" y="-50%" width="200%" height="200%"><feGaussianBlur stdDeviation="1.6"/></filter>
</defs><g clip-path="url(#tcs)">
<rect width="150" height="99" fill="#040720"/>
<circle cx="4" cy="97" r="16" fill="url(#ts2)"/><circle cx="156" cy="38" r="10" fill="#2aa6a8"/><circle cx="0" cy="9" r="6" fill="#8a3c28"/>
<g stroke-linecap="round"><path d="M32 59L46 67" stroke="#c8963c" stroke-width="3.400" stroke-linecap="butt"/><path d="M121 35L135 27" stroke="#c8963c" stroke-width="3.400" stroke-linecap="butt"/>
<path d="M20 36l4-2M98 71l6-3M130 62l6-3M112 86l7-4M40 88l6-3M140 84l5-3M72 5l6-4M118 12l5-3M34 20l4-2M120 10l4-2" stroke="#a85a3a" stroke-width=".7"/>
<path d="M50 82l4-2M88 90l4-2M138 47l4-2M14 68l4-2" stroke="#3fb8d0" stroke-width=".7"/></g>
<g filter="url(#tsb)" opacity=".55"><rect x="56" y="24" width="8" height="30" fill="#1fc0e0"/><rect x="72" y="28" width="8" height="34" fill="#1fc0e0"/><rect x="88" y="24" width="8" height="30" fill="#1fc0e0"/></g>
<path d="M58 48L76 58.500L76 63L58 52.500Z" fill="#e09a48"/><path d="M76 58.500L95 48L95 52.500L76 63Z" fill="#d8f4f6"/>
<path d="M58 52.500L76 63L95 52.500L95 56L76 67L58 56Z" fill="#6a4a36" opacity=".9"/>
<path d="M59 58L76 68L94 58L94 61L76 71L59 61Z" fill="#8a6a4a" opacity=".35"/>
<rect x="58.200" y="26" width="4.400" height="25" fill="url(#ts1)"/><rect x="74" y="24" width="4.400" height="36" fill="url(#ts1)"/><rect x="90" y="24" width="4.400" height="27" fill="url(#ts1)"/>
<rect x="57.200" y="34.600" width="6.400" height="1.600" fill="#eafcff"/><rect x="73" y="25.600" width="6.400" height="1.600" fill="#ffe6c8"/><rect x="89" y="26.600" width="6.400" height="1.600" fill="#eafcff"/>
<path d="M60.400 18L61.600 26H59.200Z" fill="#9feaf4"/><path d="M76.200 17L77.400 24H75Z" fill="#ffcf9a"/><path d="M92.200 17L93.400 24H91Z" fill="#9feaf4"/>
<circle cx="21" cy="84" r="1.500" fill="#2fa8c0"/><circle cx="124" cy="62" r="1.600" fill="#2f98b0"/><circle cx="15" cy="28" r=".9" fill="#4a90c0"/><circle cx="28" cy="13" r="1" fill="#3a7aa8"/>
</g></svg>
<div class="abs" style="left:1347.3px;top:877.3px;width:119px;height:32px;background:#272727;border-radius:4px;"></div>
<div class="t" style="left:1360px;top:887px;font-size:12.4px;line-height:12.4px;color:#e8e8e8;letter-spacing:-0.16px;">Local  Wallpapers</div>
<div class="abs" style="left:1488.3px;top:877.3px;width:118.5px;height:32px;background:#272727;border-radius:4px;"></div>
<div class="t" style="left:1496.5px;top:888px;font-size:12.4px;line-height:12.4px;color:#e8e8e8;letter-spacing:-0.14px;">Online  Wallpapers</div>
<div class="t" style="left:1777.4px;top:887px;font-size:13.2px;line-height:13.2px;color:#ececec;letter-spacing:-0.2px;">Restore</div>
<!-- fm2 -->
<div class="abs" style="left:593px;top:182px;width:929.3px;height:664px;background:#1f2022;border-radius:6px;box-shadow:0 5px 22px rgba(0,0,0,.5);overflow:hidden;"><div class="abs" style="left:0;top:0;width:100%;height:50px;background:#1e1f21"></div><div class="abs" style="left:181px;top:50px;width:760px;height:36px;background:#2d2e32"></div></div>
<svg style="left:609.6px;top:200.6px;" width="16.2" height="13.8" viewBox="0 0 16.2 13.8"><path d="M0.65 12.35V1.6Q0.65 0.65 1.6 0.65H5.6L7 2.3H14.6Q15.5 2.3 15.5 3.2V12.35Q15.5 13.2 14.6 13.2H1.6Q0.65 13.2 0.65 12.35Z" fill="none" stroke="#9b9c9f" stroke-width="1.2"/><rect x="2.1" y="4.4" width="12" height="7.4" rx="1" fill="#9b9c9f" opacity=".88"/><path d="M1.6 2.2H5.6" stroke="#9b9c9f" stroke-width="1" opacity=".8"/></svg>
<svg style="left:653.35px;top:200.65px;" width="16.7" height="13.7" viewBox="0 0 16.7 13.7"><rect x="0.65" y="0.65" width="15.4" height="12.4" rx="1.3" fill="#9b9c9f" fill-opacity=".55" stroke="#9b9c9f" stroke-width="1.2"/><rect x="7.6" y="3.2" width="7" height="7.4" fill="#9b9c9f" opacity=".55"/><polyline points="3,3.8 6.4,6.6 3,9.4" fill="none" stroke="#1d1e20" stroke-width="1.3"/></svg>
<div class="abs" style="left:691.7px;top:193px;width:73.2px;height:28.2px;background:#26272a;border-radius:5px;"></div>
<div class="abs" style="left:729.1px;top:193px;width:1px;height:28.2px;background:#1e1f21;"></div>
<svg style="left:703px;top:202.1px;" width="13" height="10.4" viewBox="0 0 13 10.4"><path d="M12.4 5.2H0.9M5.6 0.6L0.9 5.2L5.6 9.8" fill="none" stroke="#85868a" stroke-width="1.3" stroke-linecap="round" stroke-linejoin="round"/></svg>
<svg style="left:739.8px;top:202.1px;" width="13" height="10.4" viewBox="0 0 13 10.4"><path d="M0.6 5.2H12.1M7.4 0.6L12.1 5.2L7.4 9.8" fill="none" stroke="#85868a" stroke-width="1.3" stroke-linecap="round" stroke-linejoin="round"/></svg>
<div class="abs" style="left:774.8px;top:193px;width:325.2px;height:28.2px;background:#222325;border-radius:5px;"></div>
<svg style="left:784.5px;top:198.85px;" width="19" height="16.5" viewBox="0 0 19 16.5"><defs><linearGradient id="fsg794" x1="0" y1="0" x2="0" y2="1"><stop offset="0" stop-color="#f9df55"/><stop offset="1" stop-color="#ecc62c"/></linearGradient></defs>
<path d="M1.2 1.2Q1.2 0 2.4 0H6.6L8.2 1.4H16.4Q17.6 1.4 17.6 2.6V6H1.2Z" fill="#f0a42c"/>
<rect x="2" y="2.2" width="15" height="4" rx=".6" fill="#fdfdf5"/>
<rect x="0" y="3.6" width="19" height="12.9" rx="1.8" fill="url(#fsg794)"/></svg>
<div class="t" style="left:814.6px;top:199px;font-size:14.6px;line-height:14.6px;color:#f0f0f0;letter-spacing:0.94px;">Computer</div>
<svg style="left:893.4px;top:202.9px;" width="4.8" height="9.2" viewBox="0 0 4.8 9.2"><polyline points="0,0 4.8,4.6 0,9.2" fill="none" stroke="#8d8e91" stroke-width="1.6" stroke-linecap="round" stroke-linejoin="round"/></svg>
<div class="t" style="left:906.9px;top:199px;font-size:14.6px;line-height:14.6px;color:#f0f0f0;letter-spacing:0.4px;">Work Disk(D:)</div>
<svg style="left:1013.4px;top:202.9px;" width="4.8" height="9.2" viewBox="0 0 4.8 9.2"><polyline points="0,0 4.8,4.6 0,9.2" fill="none" stroke="#8d8e91" stroke-width="1.6" stroke-linecap="round" stroke-linejoin="round"/></svg>
<div class="t" style="left:1026.8px;top:199px;font-size:14.6px;line-height:14.6px;color:#f0f0f0;letter-spacing:0.92px;">Document</div>
<svg style="left:1181.5px;top:199.6px;" width="15" height="15" viewBox="0 0 15 15"><circle cx="6.6" cy="6.6" r="5.7" fill="none" stroke="#a2a3a6" stroke-width="1.3"/><line x1="10.8" y1="10.8" x2="14.5" y2="14.5" stroke="#a2a3a6" stroke-width="1.3" stroke-linecap="round"/></svg>
<svg style="left:1232px;top:200.5px;" width="16" height="14" viewBox="0 0 16 14"><rect x="0.6" y="0.6" width="14.8" height="12.8" rx="1.6" fill="none" stroke="#a2a3a6" stroke-width="1.2"/><path d="M8 0.6V13.400M0.600 7H15.400" stroke="#a2a3a6" stroke-width="1" fill="none"/><rect x="2.4" y="2.4" width="4.2" height="3.2" rx="0.8" fill="#a2a3a6" opacity="0.6"/><rect x="9.4" y="2.4" width="4.2" height="3.2" rx="0.8" fill="#a2a3a6" opacity="0.6"/><rect x="2.4" y="8.4" width="4.2" height="3.2" rx="0.8" fill="#a2a3a6" opacity="0.6"/><rect x="9.4" y="8.4" width="4.2" height="3.2" rx="0.8" fill="#a2a3a6" opacity="0.6"/></svg>
<svg style="left:1257.6px;top:205.7px;" width="8.6" height="4.4" viewBox="0 0 8.6 4.4"><polyline points="0,0 4.3,4.4 8.6,0" fill="none" stroke="#a2a3a6" stroke-width="1.3" stroke-linecap="round" stroke-linejoin="round"/></svg>
<svg style="left:1293px;top:200.3px;" width="17" height="14.5" viewBox="0 0 17 14.5"><line x1="0" y1="0.8" x2="17" y2="0.8" stroke="#a2a3a6" stroke-width="1.2" stroke-linecap="butt"/><line x1="0" y1="8.6" x2="17" y2="8.6" stroke="#a2a3a6" stroke-width="1.2" stroke-linecap="butt"/><rect x="0.3" y="3.2" width="4" height="3" rx="0.5" fill="#a2a3a6"/><rect x="6.5" y="3.2" width="4" height="3" rx="0.5" fill="#a2a3a6"/><rect x="12.7" y="3.2" width="4" height="3" rx="0.5" fill="#a2a3a6"/><rect x="0.3" y="11" width="4" height="3" rx="0.5" fill="#a2a3a6"/><rect x="6.5" y="11" width="4" height="3" rx="0.5" fill="#a2a3a6"/><rect x="12.7" y="11" width="4" height="3" rx="0.5" fill="#a2a3a6"/></svg>
<svg style="left:1318.7px;top:205.7px;" width="8.6" height="4.4" viewBox="0 0 8.6 4.4"><polyline points="0,0 4.3,4.4 8.6,0" fill="none" stroke="#a2a3a6" stroke-width="1.3" stroke-linecap="round" stroke-linejoin="round"/></svg>
<svg style="left:1355.2px;top:200.3px;" width="12.6" height="14" viewBox="0 0 12.6 14"><line x1="0" y1="1.4" x2="12.6" y2="1.4" stroke="#a2a3a6" stroke-width="1.2" stroke-linecap="butt"/><line x1="0" y1="7" x2="12.6" y2="7" stroke="#a2a3a6" stroke-width="1.2" stroke-linecap="butt"/><line x1="0" y1="12.6" x2="12.6" y2="12.6" stroke="#a2a3a6" stroke-width="1.2" stroke-linecap="butt"/></svg>
<svg style="left:1400.3px;top:206.5px;" width="10.4" height="2" viewBox="0 0 10.4 2"><line x1="0" y1="1" x2="10.4" y2="1" stroke="#a9aaad" stroke-width="1.15" stroke-linecap="butt"/></svg>
<svg style="left:1444.2px;top:202px;" width="10.2" height="10.2" viewBox="0 0 10.2 10.2"><rect x="0.57" y="0.57" width="9.05" height="9.05" rx="1.4" fill="none" stroke="#a9aaad" stroke-width="1.15"/></svg>
<svg style="left:1489.4px;top:202.3px;" width="9.6" height="9.6" viewBox="0 0 9.6 9.6"><line x1="0.3" y1="0.3" x2="9.3" y2="9.3" stroke="#a9aaad" stroke-width="1.15" stroke-linecap="butt"/><line x1="9.3" y1="0.3" x2="0.3" y2="9.3" stroke="#a9aaad" stroke-width="1.15" stroke-linecap="butt"/></svg>
<svg style="left:1457.5px;top:244px;" width="15" height="13" viewBox="0 0 15 13"><rect x="0.6" y="0.6" width="13.8" height="11.8" rx="1.3" fill="none" stroke="#a2a3a6" stroke-width="1.2"/><path d="M0.6 1.9Q0.6 0.6 1.9 0.6H13.1Q14.4 0.6 14.4 1.9V3.5H0.6Z" fill="#a2a3a6"/><rect x="9.6" y="1.5" width="1.1" height="1" fill="#2d2e32"/><rect x="11.7" y="1.5" width="1.1" height="1" fill="#2d2e32"/><line x1="5.2" y1="3.2" x2="5.2" y2="12.4" stroke="#a2a3a6" stroke-width="1.2" stroke-linecap="butt"/><line x1="9.8" y1="3.2" x2="9.8" y2="12.4" stroke="#a2a3a6" stroke-width="1.2" stroke-linecap="butt"/></svg>
<svg style="left:1487.5px;top:244px;" width="15" height="13" viewBox="0 0 15 13"><rect x="0.6" y="0.6" width="13.8" height="11.8" rx="1.3" fill="none" stroke="#a2a3a6" stroke-width="1.2"/><path d="M0.6 1.9Q0.6 0.6 1.9 0.6H13.1Q14.4 0.6 14.4 1.9V3.5H0.6Z" fill="#a2a3a6"/><rect x="9.6" y="1.5" width="1.1" height="1" fill="#2d2e32"/><rect x="11.7" y="1.5" width="1.1" height="1" fill="#2d2e32"/><line x1="3" y1="3.2" x2="3" y2="12.4" stroke="#a2a3a6" stroke-width="1.7" stroke-linecap="butt"/><line x1="8.8" y1="3.2" x2="8.8" y2="12.4" stroke="#a2a3a6" stroke-width="1.5" stroke-linecap="butt"/><line x1="10.4" y1="5.4" x2="13" y2="5.4" stroke="#a2a3a6" stroke-width="1.1" stroke-linecap="butt"/><line x1="10.4" y1="7.5" x2="13" y2="7.5" stroke="#a2a3a6" stroke-width="1.1" stroke-linecap="butt"/><line x1="10.4" y1="9.6" x2="13" y2="9.6" stroke="#a2a3a6" stroke-width="1.1" stroke-linecap="butt"/></svg>
<div class="t" style="left:1273.6px;top:283px;font-size:14.2px;line-height:14.2px;color:#e6e6e6;letter-spacing:-0.12px;">File Type</div>
<div class="abs" style="left:1363.2px;top:282px;width:1px;height:21.5px;background:#3c3d40;"></div>
<div class="t" style="left:1383.8px;top:283px;font-size:14.2px;line-height:14.2px;color:#e6e6e6;letter-spacing:-0.47px;">Size</div>
<div class="abs" style="left:780px;top:313.2px;width:703.8px;height:34.3px;background:#222325;border-radius:3px;"></div>
<div class="t" style="left:1271.2px;top:323px;font-size:14.2px;line-height:14.2px;color:#e6e6e6;letter-spacing:0.05px;">Folder</div>
<div class="abs" style="left:780px;top:347.9px;width:703.8px;height:34.3px;background:#2c2d30;border-radius:3px;"></div>
<div class="t" style="left:1272.5px;top:358px;font-size:14.2px;line-height:14.2px;color:#e6e6e6;letter-spacing:0.05px;">Folder</div>
<svg style="left:1451.8px;top:354.2px;" width="22" height="22" viewBox="0 0 22 22"><circle cx="11" cy="11" r="10" fill="#4668e2"/><polyline points="7.2,11.2 9.9,13.9 15,8.3" fill="none" stroke="#fff" stroke-width="1.25" stroke-linecap="round" stroke-linejoin="round"/></svg>
<div class="abs" style="left:780px;top:382.6px;width:703.8px;height:34.3px;background:#2c2d30;border-radius:3px;"></div>
<div class="t" style="left:1272.1px;top:393px;font-size:14.2px;line-height:14.2px;color:#e6e6e6;letter-spacing:0.05px;">Folder</div>
<svg style="left:1451.8px;top:388.9px;" width="22" height="22" viewBox="0 0 22 22"><circle cx="11" cy="11" r="10" fill="#4668e2"/><polyline points="7.2,11.2 9.9,13.9 15,8.3" fill="none" stroke="#fff" stroke-width="1.25" stroke-linecap="round" stroke-linejoin="round"/></svg>
<div class="t" style="left:1269.1px;top:428px;font-size:14.2px;line-height:14.2px;color:#e6e6e6;letter-spacing:0.05px;">Folder</div>
<div class="abs" style="left:780px;top:452.6px;width:703.8px;height:34.3px;background:#222325;border-radius:3px;"></div>
<div class="t" style="left:1267.1px;top:463px;font-size:14.2px;line-height:14.2px;color:#e6e6e6;letter-spacing:0.05px;">Folder</div>
<div class="abs" style="left:1409.3px;top:824px;width:93.4px;height:4px;background:#2d2e32;border-radius:2px;"></div>
<div class="abs" style="left:1409.3px;top:824px;width:47px;height:4px;background:#5b7be9;border-radius:2px;"></div>
<div class="abs" style="left:1446.3px;top:816px;width:20px;height:20px;background:#4e6de3;border-radius:50%;"></div>
<!-- fm1 -->
<div class="abs" style="left:125.5px;top:232.8px;width:1159px;height:663.6px;background:#1f2022;border-radius:6px;box-shadow:0 4px 16px rgba(0,0,0,.55),0 0 0 1px rgba(62,74,140,.75);overflow:hidden;"><div class="abs" style="left:0;top:0;width:100%;height:49.400px;background:#1d1e20"></div><div class="abs" style="left:0;top:49.400px;width:179.800px;height:616px;background:linear-gradient(90deg,rgba(10,40,42,.35) 0,rgba(0,0,0,0) 3%,rgba(0,0,0,0) 72%,rgba(8,20,22,.3) 100%),radial-gradient(ellipse 170px 120px at 60px 600px,rgba(70,34,46,.55),rgba(70,34,46,0) 100%),linear-gradient(180deg,#1f4847 0,#1f4746 70%,#234445 79%,#313a3e 87%,#3f2a35 94%,#43242f 100%)"></div></div>
<svg style="left:140.6px;top:251.6px;" width="16.2" height="13.8" viewBox="0 0 16.2 13.8"><path d="M0.65 12.35V1.6Q0.65 0.65 1.6 0.65H5.6L7 2.3H14.6Q15.5 2.3 15.5 3.2V12.35Q15.5 13.2 14.6 13.2H1.6Q0.65 13.2 0.65 12.35Z" fill="none" stroke="#9b9c9f" stroke-width="1.2"/><rect x="2.1" y="4.4" width="12" height="7.4" rx="1" fill="#9b9c9f" opacity=".88"/><path d="M1.6 2.2H5.6" stroke="#9b9c9f" stroke-width="1" opacity=".8"/></svg>
<svg style="left:184.35px;top:251.65px;" width="16.7" height="13.7" viewBox="0 0 16.7 13.7"><rect x="0.65" y="0.65" width="15.4" height="12.4" rx="1.3" fill="#9b9c9f" fill-opacity=".55" stroke="#9b9c9f" stroke-width="1.2"/><rect x="7.6" y="3.2" width="7" height="7.4" fill="#9b9c9f" opacity=".55"/><polyline points="3,3.8 6.4,6.6 3,9.4" fill="none" stroke="#1d1e20" stroke-width="1.3"/></svg>
<div class="abs" style="left:222.7px;top:244px;width:73.2px;height:28.2px;background:#26272a;border-radius:5px;"></div>
<div class="abs" style="left:260.1px;top:244px;width:1px;height:28.2px;background:#1e1f21;"></div>
<svg style="left:234px;top:253.1px;" width="13" height="10.4" viewBox="0 0 13 10.4"><path d="M12.4 5.2H0.9M5.6 0.6L0.9 5.2L5.6 9.8" fill="none" stroke="#85868a" stroke-width="1.3" stroke-linecap="round" stroke-linejoin="round"/></svg>
<svg style="left:270.8px;top:253.1px;" width="13" height="10.4" viewBox="0 0 13 10.4"><path d="M0.6 5.2H12.1M7.4 0.6L12.1 5.2L7.4 9.8" fill="none" stroke="#85868a" stroke-width="1.3" stroke-linecap="round" stroke-linejoin="round"/></svg>
<div class="abs" style="left:305.8px;top:244px;width:620.8px;height:28.2px;background:#222325;border-radius:5px;"></div>
<svg style="left:315.5px;top:249.85px;" width="19" height="16.5" viewBox="0 0 19 16.5"><defs><linearGradient id="fsg325" x1="0" y1="0" x2="0" y2="1"><stop offset="0" stop-color="#f9df55"/><stop offset="1" stop-color="#ecc62c"/></linearGradient></defs>
<path d="M1.2 1.2Q1.2 0 2.4 0H6.6L8.2 1.4H16.4Q17.6 1.4 17.6 2.6V6H1.2Z" fill="#f0a42c"/>
<rect x="2" y="2.2" width="15" height="4" rx=".6" fill="#fdfdf5"/>
<rect x="0" y="3.6" width="19" height="12.9" rx="1.8" fill="url(#fsg325)"/></svg>
<div class="t" style="left:346.5px;top:250px;font-size:14.6px;line-height:14.6px;color:#f0f0f0;letter-spacing:0.94px;">Computer</div>
<svg style="left:425.8px;top:253.9px;" width="4.8" height="9.2" viewBox="0 0 4.8 9.2"><polyline points="0,0 4.8,4.6 0,9.2" fill="none" stroke="#8d8e91" stroke-width="1.6" stroke-linecap="round" stroke-linejoin="round"/></svg>
<div class="t" style="left:441px;top:250px;font-size:14.6px;line-height:14.6px;color:#f0f0f0;letter-spacing:0.42px;">Work Disk(D:)</div>
<svg style="left:546.8px;top:253.9px;" width="4.8" height="9.2" viewBox="0 0 4.8 9.2"><polyline points="0,0 4.8,4.6 0,9.2" fill="none" stroke="#8d8e91" stroke-width="1.6" stroke-linecap="round" stroke-linejoin="round"/></svg>
<div class="t" style="left:562.1px;top:250px;font-size:14.6px;line-height:14.6px;color:#f0f0f0;letter-spacing:0.99px;">Document</div>
<svg style="left:907.1px;top:256.4px;" width="9" height="4.6" viewBox="0 0 9 4.6"><polyline points="0,0 4.5,4.6 9,0" fill="none" stroke="#a2a3a6" stroke-width="1.3" stroke-linecap="round" stroke-linejoin="round"/></svg>
<svg style="left:949.4px;top:250.6px;" width="15" height="15" viewBox="0 0 15 15"><circle cx="6.6" cy="6.6" r="5.7" fill="none" stroke="#a2a3a6" stroke-width="1.3"/><line x1="10.8" y1="10.8" x2="14.5" y2="14.5" stroke="#a2a3a6" stroke-width="1.3" stroke-linecap="round"/></svg>
<svg style="left:999.5px;top:251.5px;" width="16" height="14" viewBox="0 0 16 14"><rect x="0.6" y="0.6" width="14.8" height="12.8" rx="1.6" fill="none" stroke="#a2a3a6" stroke-width="1.2"/><path d="M8 0.6V13.400M0.600 7H15.400" stroke="#a2a3a6" stroke-width="1" fill="none"/><rect x="2.4" y="2.4" width="4.2" height="3.2" rx="0.8" fill="#a2a3a6" opacity="0.6"/><rect x="9.4" y="2.4" width="4.2" height="3.2" rx="0.8" fill="#a2a3a6" opacity="0.6"/><rect x="2.4" y="8.4" width="4.2" height="3.2" rx="0.8" fill="#a2a3a6" opacity="0.6"/><rect x="9.4" y="8.4" width="4.2" height="3.2" rx="0.8" fill="#a2a3a6" opacity="0.6"/></svg>
<svg style="left:1025.1px;top:256.7px;" width="8.6" height="4.4" viewBox="0 0 8.6 4.4"><polyline points="0,0 4.3,4.4 8.6,0" fill="none" stroke="#a2a3a6" stroke-width="1.3" stroke-linecap="round" stroke-linejoin="round"/></svg>
<svg style="left:1060.5px;top:251.3px;" width="17" height="14.5" viewBox="0 0 17 14.5"><line x1="0" y1="0.8" x2="17" y2="0.8" stroke="#a2a3a6" stroke-width="1.2" stroke-linecap="butt"/><line x1="0" y1="8.6" x2="17" y2="8.6" stroke="#a2a3a6" stroke-width="1.2" stroke-linecap="butt"/><rect x="0.3" y="3.2" width="4" height="3" rx="0.5" fill="#a2a3a6"/><rect x="6.5" y="3.2" width="4" height="3" rx="0.5" fill="#a2a3a6"/><rect x="12.7" y="3.2" width="4" height="3" rx="0.5" fill="#a2a3a6"/><rect x="0.3" y="11" width="4" height="3" rx="0.5" fill="#a2a3a6"/><rect x="6.5" y="11" width="4" height="3" rx="0.5" fill="#a2a3a6"/><rect x="12.7" y="11" width="4" height="3" rx="0.5" fill="#a2a3a6"/></svg>
<svg style="left:1086.2px;top:256.7px;" width="8.6" height="4.4" viewBox="0 0 8.6 4.4"><polyline points="0,0 4.3,4.4 8.6,0" fill="none" stroke="#a2a3a6" stroke-width="1.3" stroke-linecap="round" stroke-linejoin="round"/></svg>
<svg style="left:1122.7px;top:251.3px;" width="12.6" height="14" viewBox="0 0 12.6 14"><line x1="0" y1="1.4" x2="12.6" y2="1.4" stroke="#a2a3a6" stroke-width="1.2" stroke-linecap="butt"/><line x1="0" y1="7" x2="12.6" y2="7" stroke="#a2a3a6" stroke-width="1.2" stroke-linecap="butt"/><line x1="0" y1="12.6" x2="12.6" y2="12.6" stroke="#a2a3a6" stroke-width="1.2" stroke-linecap="butt"/></svg>
<svg style="left:1167.8px;top:257.5px;" width="10.4" height="2" viewBox="0 0 10.4 2"><line x1="0" y1="1" x2="10.4" y2="1" stroke="#a9aaad" stroke-width="1.15" stroke-linecap="butt"/></svg>
<svg style="left:1211.9px;top:253px;" width="10.2" height="10.2" viewBox="0 0 10.2 10.2"><rect x="0.57" y="0.57" width="9.05" height="9.05" rx="1.4" fill="none" stroke="#a9aaad" stroke-width="1.15"/></svg>
<svg style="left:1256.9px;top:253.3px;" width="9.6" height="9.6" viewBox="0 0 9.6 9.6"><line x1="0.3" y1="0.3" x2="9.3" y2="9.3" stroke="#a9aaad" stroke-width="1.15" stroke-linecap="butt"/><line x1="9.3" y1="0.3" x2="0.3" y2="9.3" stroke="#a9aaad" stroke-width="1.15" stroke-linecap="butt"/></svg>
<svg style="left:140.6px;top:298.8px;" width="9.6" height="4.8" viewBox="0 0 9.6 4.8"><polyline points="0,0 4.8,4.8 9.6,0" fill="none" stroke="#8aa7a3" stroke-width="1.3" stroke-linecap="round" stroke-linejoin="round"/></svg>
<div class="t" style="left:161.2px;top:294px;font-size:14.6px;line-height:14.6px;color:#f0f0f0;letter-spacing:0.79px;">Favorite</div>
<svg style="left:164.1px;top:328.7px;" width="15.8" height="15.8" viewBox="0 0 17 17"><g fill="none" stroke="#8aa7a3" stroke-width="1.2" stroke-linecap="round" stroke-linejoin="round"><path d="M2.300 5.200A7.300 7.300 0 1 1 1.300 9.600"/><path d="M0.800 2.800L2.200 5.600L5.100 4.600"/><path d="M8.500 4.600V9H12.200"/></g></svg>
<div class="t" style="left:190.2px;top:330px;font-size:14.6px;line-height:14.6px;color:#f0f0f0;letter-spacing:0.43px;">Recent</div>
<svg style="left:164.1px;top:364.7px;" width="15.8" height="15.8" viewBox="0 0 17 17"><g fill="none" stroke="#8aa7a3" stroke-width="1.2" stroke-linecap="round" stroke-linejoin="round"><rect x="0.800" y="2.600" width="15.400" height="12" rx="0.500"/><path d="M3.400 12H16" stroke-width="1"/><path d="M3.400 5V10" stroke-width="1" stroke-dasharray="0.9 1.100"/></g></svg>
<div class="t" style="left:190.2px;top:366px;font-size:14.6px;line-height:14.6px;color:#f0f0f0;letter-spacing:0.74px;">Desktop</div>
<svg style="left:164.1px;top:400.6px;" width="15.8" height="15.8" viewBox="0 0 17 17"><g fill="none" stroke="#8aa7a3" stroke-width="1.2" stroke-linecap="round" stroke-linejoin="round"><path d="M1.400 3.600H15.600"/><path d="M5.600 3.400V1.600Q5.600 1 6.200 1H10.800Q11.400 1 11.400 1.600V3.400" fill="#8aa7a3" fill-opacity=".6"/><path d="M2.800 3.800L3.400 14.800Q3.500 15.800 4.500 15.800H12.500Q13.500 15.800 13.600 14.800L14.200 3.800"/><path d="M6 6.400V13M8.500 6.400V13M11 6.400V13" stroke-width="1"/></g></svg>
<div class="t" style="left:189.2px;top:402px;font-size:14.6px;line-height:14.6px;color:#f0f0f0;letter-spacing:0.61px;">Trash</div>
<svg style="left:140.6px;top:442.9px;" width="9.6" height="4.8" viewBox="0 0 9.6 4.8"><polyline points="0,0 4.8,4.8 9.6,0" fill="none" stroke="#8aa7a3" stroke-width="1.3" stroke-linecap="round" stroke-linejoin="round"/></svg>
<div class="t" style="left:161.2px;top:438px;font-size:14.6px;line-height:14.6px;color:#f0f0f0;letter-spacing:0.65px;">Personal</div>
<svg style="left:164.1px;top:472.6px;" width="15.8" height="15.8" viewBox="0 0 17 17"><g fill="none" stroke="#8aa7a3" stroke-width="1.2" stroke-linecap="round" stroke-linejoin="round"><path d="M2.400 2Q2.400 1 3.400 1H10.600L14.600 5V15Q14.600 16 13.600 16H3.400Q2.400 16 2.400 15Z"/><path d="M10.400 1.200V5.200H14.400" stroke-width="1"/><rect x="4.600" y="3.400" width="3.400" height="2.600" fill="#8aa7a3" stroke="none"/><path d="M4.800 8H12.200M4.800 10.200H12.200M4.800 12.400H12.200M4.800 14.400H12.200" stroke-width="1"/></g></svg>
<div class="t" style="left:190.2px;top:474px;font-size:14.6px;line-height:14.6px;color:#f0f0f0;letter-spacing:0.79px;">Documents</div>
<svg style="left:164.1px;top:508.7px;" width="15.8" height="15.8" viewBox="0 0 17 17"><g fill="none" stroke="#8aa7a3" stroke-width="1.2" stroke-linecap="round" stroke-linejoin="round"><rect x="0.800" y="2.600" width="15.400" height="11.800" rx="1.200"/><path d="M3 12.400L6.600 7.400L9.200 10.400L10.800 9L14 12.400Z" fill="#8aa7a3" stroke="none"/><circle cx="11.600" cy="6" r="1.100" fill="#8aa7a3" stroke="none"/></g></svg>
<div class="t" style="left:189.4px;top:510px;font-size:14.6px;line-height:14.6px;color:#f0f0f0;letter-spacing:0.75px;">Pictures</div>
<svg style="left:164.1px;top:544.7px;" width="15.8" height="15.8" viewBox="0 0 17 17"><g fill="none" stroke="#8aa7a3" stroke-width="1.2" stroke-linecap="round" stroke-linejoin="round"><rect x="2" y="1.600" width="13" height="13.800" rx="1"/><path d="M5 1.600V15.400M12 1.600V15.400" stroke-width="1"/><path d="M2.200 4.400H4.800M2.200 7.200H4.800M2.200 10H4.800M2.200 12.800H4.800M12.200 4.400H14.800M12.200 7.200H14.800M12.200 10H14.800M12.200 12.800H14.800" stroke-width="1"/><path d="M7 6L10.600 8.500L7 11Z" fill="#8aa7a3" stroke="none"/></g></svg>
<div class="t" style="left:189.6px;top:546px;font-size:14.6px;line-height:14.6px;color:#f0f0f0;letter-spacing:0.6px;">Videos</div>
<svg style="left:164.1px;top:580.6px;" width="15.8" height="15.8" viewBox="0 0 17 17"><g fill="none" stroke="#8aa7a3" stroke-width="1.2" stroke-linecap="round" stroke-linejoin="round"><circle cx="8.500" cy="8.500" r="7.600"/><path d="M6.600 3.800H10.400V8H13L8.500 12.600L4 8H6.600Z" fill="#8aa7a3" stroke="none"/><path d="M4.600 13.200H12.400" stroke-width="1"/></g></svg>
<div class="t" style="left:190.2px;top:582px;font-size:14.6px;line-height:14.6px;color:#f0f0f0;letter-spacing:0.82px;">Downloads</div>
<svg style="left:164.1px;top:616.5px;" width="15.8" height="15.8" viewBox="0 0 17 17"><g fill="none" stroke="#8aa7a3" stroke-width="1.2" stroke-linecap="round" stroke-linejoin="round"><path d="M5.600 13V3.200L15 1.400V11.400"/><ellipse cx="3.400" cy="13.400" rx="2.400" ry="1.900" fill="#8aa7a3"/><ellipse cx="12.800" cy="11.800" rx="2.400" ry="1.900" fill="#8aa7a3"/></g></svg>
<div class="t" style="left:190.2px;top:618px;font-size:14.6px;line-height:14.6px;color:#f0f0f0;letter-spacing:0.54px;">Music</div>
<div class="abs" style="left:128.9px;top:643px;width:172.2px;height:36px;background:#4a64da;border-radius:3px;"></div>
<svg style="left:140.6px;top:658.5px;" width="9.6" height="4.8" viewBox="0 0 9.6 4.8"><polyline points="0,0 4.8,4.8 9.6,0" fill="none" stroke="#ffffff" stroke-width="1.4" stroke-linecap="round" stroke-linejoin="round"/></svg>
<div class="t" style="left:162.2px;top:654px;font-size:14.6px;line-height:14.6px;color:#f0f0f0;letter-spacing:0.96px;">Computer</div>
<svg style="left:163.9px;top:689.8px;" width="16.2" height="13.4" viewBox="0 0 17 14"><path d="M3.200 0.400H13.800Q14.800 0.400 15.100 1.400L17 9.400V12.400Q17 13.800 15.600 13.800H1.400Q0 13.800 0 12.400V9.400L1.900 1.400Q2.200 0.400 3.200 0.400Z" fill="#9ab3b0"/><path d="M0.400 10H16.600" stroke="#2b4a4c" stroke-width="1" opacity=".7"/><rect x="12" y="11.300" width="2.800" height="1.100" fill="#2b4a4c" opacity=".8"/></svg>
<svg style="left:151.6px;top:691.7px;" width="4.8" height="9.6" viewBox="0 0 4.8 9.6"><polyline points="0,0 4.8,4.8 0,9.6" fill="none" stroke="#8aa7a3" stroke-width="1.3" stroke-linecap="round" stroke-linejoin="round"/></svg>
<div class="t" style="left:190.2px;top:690px;font-size:14.6px;line-height:14.6px;color:#f0f0f0;letter-spacing:0.35px;">System Disk(C:)</div>
<svg style="left:163.9px;top:725.9px;" width="16.2" height="13.4" viewBox="0 0 17 14"><path d="M3.200 0.400H13.800Q14.800 0.400 15.100 1.400L17 9.400V12.400Q17 13.800 15.600 13.800H1.400Q0 13.800 0 12.400V9.400L1.900 1.400Q2.200 0.400 3.200 0.400Z" fill="#9ab3b0"/><path d="M0.400 10H16.600" stroke="#2b4a4c" stroke-width="1" opacity=".7"/><rect x="12" y="11.300" width="2.800" height="1.100" fill="#2b4a4c" opacity=".8"/></svg>
<svg style="left:151.6px;top:727.8px;" width="4.8" height="9.6" viewBox="0 0 4.8 9.6"><polyline points="0,0 4.8,4.8 0,9.6" fill="none" stroke="#8aa7a3" stroke-width="1.3" stroke-linecap="round" stroke-linejoin="round"/></svg>
<div class="t" style="left:190.2px;top:726px;font-size:14.6px;line-height:14.6px;color:#f0f0f0;letter-spacing:0.44px;">Work Disk(D:)</div>
<svg style="left:164.1px;top:760.6px;" width="15.8" height="15.8" viewBox="0 0 17 17"><g fill="none" stroke="#8aa7a3" stroke-width="1.2" stroke-linecap="round" stroke-linejoin="round"><rect x="3" y="5.200" width="11" height="11" rx="1.400"/><path d="M5.400 5V1H11.600V5"/><path d="M7.400 2.600V3.400M9.600 2.600V3.400" stroke-width="1"/><path d="M8.500 8V13.400M6.600 9.400V10.800L8.500 12M10.400 9V10.400L8.500 11.400" stroke-width="1"/></g></svg>
<svg style="left:151.6px;top:763.7px;" width="4.8" height="9.6" viewBox="0 0 4.8 9.6"><polyline points="0,0 4.8,4.8 0,9.6" fill="none" stroke="#8aa7a3" stroke-width="1.3" stroke-linecap="round" stroke-linejoin="round"/></svg>
<div class="t" style="left:190.2px;top:762px;font-size:14.6px;line-height:14.6px;color:#f0f0f0;letter-spacing:0.2px;">USB Flash Disk</div>
<div class="abs" style="left:128.9px;top:860.2px;width:172.2px;height:32.6px;background:rgba(255,255,255,.11);border-radius:2px;"></div>
<div class="abs" style="left:141px;top:871px;width:12px;height:12px;background:#7a6570;border-radius:50%;border:1px solid #a999a2;"></div>
<div class="t" style="left:164px;top:870px;font-size:14.6px;line-height:14.6px;color:#f0f0f0;letter-spacing:0.5px;">All Tags ...</div>
<div class="abs" style="left:305px;top:283px;width:979.5px;height:36.2px;background:#2d2e32;"></div>
<div class="abs" style="left:473.4px;top:287px;width:167.4px;height:33px;background:#1f2022;border-radius:6px 6px 0 0;"></div>
<svg style="left:467.4px;top:313.2px;" width="6" height="6" viewBox="0 0 6 6"><path d="M6 0V6H0A6 6 0 0 0 6 0Z" fill="#1f2022"/></svg>
<svg style="left:640.8px;top:313.2px;" width="6" height="6" viewBox="0 0 6 6"><path d="M0 0V6H6A6 6 0 0 1 0 0Z" fill="#1f2022"/></svg>
<svg style="left:314.4px;top:292.8px;" width="21.2" height="17.2" viewBox="0 0 21.2 17.2"><defs><linearGradient id="mtg" x1="0" y1="0" x2="1" y2="1"><stop offset="0" stop-color="#3fa4f4"/><stop offset="1" stop-color="#5cc0fa"/></linearGradient></defs>
<rect x="0" y="0" width="21.200" height="13.600" rx="1.600" fill="url(#mtg)"/><rect x="0" y="12.200" width="21.200" height="1.400" fill="#e8f2fa" opacity=".85"/>
<rect x="6.200" y="16" width="8.800" height="1.200" fill="#9aa0a8"/></svg>
<div class="t" style="left:346.3px;top:293px;font-size:14.6px;line-height:14.6px;color:#f0f0f0;letter-spacing:0.97px;">Computer</div>
<svg style="left:453.7px;top:296.1px;" width="9.4" height="9.4" viewBox="0 0 9.4 9.4"><line x1="0.3" y1="0.3" x2="9.1" y2="9.1" stroke="#5e5f63" stroke-width="1.2" stroke-linecap="butt"/><line x1="9.1" y1="0.3" x2="0.3" y2="9.1" stroke="#5e5f63" stroke-width="1.2" stroke-linecap="butt"/></svg>
<svg style="left:482px;top:292.4px;" width="19.2" height="16.4" viewBox="0 0 19 16.5"><defs><linearGradient id="fsg491" x1="0" y1="0" x2="0" y2="1"><stop offset="0" stop-color="#f9df55"/><stop offset="1" stop-color="#ecc62c"/></linearGradient></defs>
<path d="M1.2 1.2Q1.2 0 2.4 0H6.6L8.2 1.4H16.4Q17.6 1.4 17.6 2.6V6H1.2Z" fill="#f0a42c"/>
<rect x="2" y="2.2" width="15" height="4" rx=".6" fill="#fdfdf5"/>
<rect x="0" y="3.6" width="19" height="12.9" rx="1.8" fill="url(#fsg491)"/></svg>
<div class="t" style="left:511.3px;top:293px;font-size:14.6px;line-height:14.6px;color:#f0f0f0;letter-spacing:0.92px;">Document</div>
<svg style="left:621.6px;top:296.5px;" width="9.4" height="9.4" viewBox="0 0 9.4 9.4"><line x1="0.3" y1="0.3" x2="9.1" y2="9.1" stroke="#66676b" stroke-width="1.2" stroke-linecap="butt"/><line x1="9.1" y1="0.3" x2="0.3" y2="9.1" stroke="#66676b" stroke-width="1.2" stroke-linecap="butt"/></svg>
<div class="abs" style="left:651.2px;top:291.6px;width:20.4px;height:20.4px;background:#37383c;border-radius:50%;"></div>
<svg style="left:656px;top:296.4px;" width="10.8" height="10.8" viewBox="0 0 10.8 10.8"><path d="M5.400 0.400V10.400M0.400 5.400H10.400" stroke="#77787c" stroke-width="1.200" fill="none"/></svg>
<svg style="left:1225px;top:294.9px;" width="15" height="13" viewBox="0 0 15 13"><rect x="0.6" y="0.6" width="13.8" height="11.8" rx="1.3" fill="none" stroke="#a2a3a6" stroke-width="1.2"/><path d="M0.6 1.9Q0.6 0.6 1.9 0.6H13.1Q14.4 0.6 14.4 1.9V3.5H0.6Z" fill="#a2a3a6"/><rect x="9.6" y="1.5" width="1.1" height="1" fill="#2d2e32"/><rect x="11.7" y="1.5" width="1.1" height="1" fill="#2d2e32"/><line x1="5.2" y1="3.2" x2="5.2" y2="12.4" stroke="#a2a3a6" stroke-width="1.2" stroke-linecap="butt"/><line x1="9.8" y1="3.2" x2="9.8" y2="12.4" stroke="#a2a3a6" stroke-width="1.2" stroke-linecap="butt"/></svg>
<div class="abs" style="left:1249px;top:288px;width:26.2px;height:26.2px;background:#4b66dc;border-radius:3px;"></div>
<svg style="left:1254.7px;top:294.9px;" width="15" height="13" viewBox="0 0 15 13"><rect x="0.6" y="0.6" width="13.8" height="11.8" rx="1.3" fill="none" stroke="#ffffff" stroke-width="1.2"/><path d="M0.6 1.9Q0.6 0.6 1.9 0.6H13.1Q14.4 0.6 14.4 1.9V3.5H0.6Z" fill="#ffffff"/><rect x="9.6" y="1.5" width="1.1" height="1" fill="#4b66dc"/><rect x="11.7" y="1.5" width="1.1" height="1" fill="#4b66dc"/><line x1="3" y1="3.2" x2="3" y2="12.4" stroke="#ffffff" stroke-width="1.7" stroke-linecap="butt"/><line x1="8.8" y1="3.2" x2="8.8" y2="12.4" stroke="#ffffff" stroke-width="1.5" stroke-linecap="butt"/><line x1="10.4" y1="5.4" x2="13" y2="5.4" stroke="#ffffff" stroke-width="1.1" stroke-linecap="butt"/><line x1="10.4" y1="7.5" x2="13" y2="7.5" stroke="#ffffff" stroke-width="1.1" stroke-linecap="butt"/><line x1="10.4" y1="9.6" x2="13" y2="9.6" stroke="#ffffff" stroke-width="1.1" stroke-linecap="butt"/></svg>
<svg style="left:345.8px;top:357.8px;" width="56.4" height="48.4" viewBox="0 0 56.4 48.4"><defs><linearGradient id="fga" x1="0" y1="0" x2="0" y2="1"><stop offset="0" stop-color="#f8de52"/><stop offset="0.5" stop-color="#f3d540"/><stop offset="1" stop-color="#ecc72e"/></linearGradient>
<linearGradient id="fba" x1="0" y1="0" x2="0" y2="1"><stop offset="0" stop-color="#f4b03a"/><stop offset="1" stop-color="#ea9a22"/></linearGradient></defs>
<path d="M2.800 3.600Q2.800 0 6.400 0H17.600Q19.400 0 20.400 1.300L21.400 2.600H49.800Q53.400 2.600 53.400 6.200V20H2.800Z" fill="url(#fba)"/>
<path d="M5.800 8.400Q5.800 6 8.200 6H48Q50.400 6 50.400 8.400V16H5.800Z" fill="#fdfcf4"/>
<path d="M5.800 9.600H50.400V12H5.800Z" fill="#f1ead2" opacity=".5"/>
<rect x="0" y="10.800" width="56.400" height="37.600" rx="5" fill="url(#fga)"/>
<path d="M0 15.800Q0 10.800 5 10.800H51.400Q56.400 10.800 56.400 15.800V16.600Q56.400 11.800 51.400 11.800H5Q0 11.800 0 16.600Z" fill="#fbe98a" opacity=".7"/></svg>
<div class="t" style="left:340.55px;top:421px;font-size:14.6px;line-height:14.6px;color:#f0f0f0;letter-spacing:0.87px;">Software</div>
<div class="t" style="left:350.55px;top:439px;font-size:14.6px;line-height:14.6px;color:#f0f0f0;letter-spacing:0.7px;">Center</div>
<svg style="left:469.9px;top:357.8px;" width="56.4" height="48.4" viewBox="0 0 56.4 48.4"><defs><linearGradient id="fgb" x1="0" y1="0" x2="0" y2="1"><stop offset="0" stop-color="#f8de52"/><stop offset="0.5" stop-color="#f3d540"/><stop offset="1" stop-color="#ecc72e"/></linearGradient>
<linearGradient id="fbb" x1="0" y1="0" x2="0" y2="1"><stop offset="0" stop-color="#f4b03a"/><stop offset="1" stop-color="#ea9a22"/></linearGradient></defs>
<path d="M2.800 3.600Q2.800 0 6.400 0H17.600Q19.400 0 20.400 1.300L21.400 2.600H49.800Q53.400 2.600 53.400 6.200V20H2.800Z" fill="url(#fbb)"/>
<path d="M5.800 8.400Q5.800 6 8.200 6H48Q50.400 6 50.400 8.400V16H5.800Z" fill="#fdfcf4"/>
<path d="M5.800 9.600H50.400V12H5.800Z" fill="#f1ead2" opacity=".5"/>
<rect x="0" y="10.800" width="56.400" height="37.600" rx="5" fill="url(#fgb)"/>
<path d="M0 15.800Q0 10.800 5 10.800H51.400Q56.400 10.800 56.400 15.800V16.600Q56.400 11.800 51.400 11.800H5Q0 11.800 0 16.600Z" fill="#fbe98a" opacity=".7"/></svg>
<div class="t" style="left:461.75px;top:421px;font-size:14.6px;line-height:14.6px;color:#f0f0f0;letter-spacing:0.9px;">Operating</div>
<div class="t" style="left:473.7px;top:439px;font-size:14.6px;line-height:14.6px;color:#f0f0f0;letter-spacing:0.46px;">System</div>
<div class="abs" style="left:570px;top:339.2px;width:104.2px;height:119.6px;background:#333436;border-radius:5px;overflow:hidden;"><div class="abs" style="left:0;top:75.800px;width:100%;height:44px;background:#4a69e2"></div></div>
<svg style="left:593.8px;top:357.8px;" width="56.4" height="48.4" viewBox="0 0 56.4 48.4"><defs><linearGradient id="fgc" x1="0" y1="0" x2="0" y2="1"><stop offset="0" stop-color="#f8de52"/><stop offset="0.5" stop-color="#f3d540"/><stop offset="1" stop-color="#ecc72e"/></linearGradient>
<linearGradient id="fbc" x1="0" y1="0" x2="0" y2="1"><stop offset="0" stop-color="#f4b03a"/><stop offset="1" stop-color="#ea9a22"/></linearGradient></defs>
<path d="M2.800 3.600Q2.800 0 6.400 0H17.600Q19.400 0 20.400 1.300L21.400 2.600H49.800Q53.400 2.600 53.400 6.200V20H2.800Z" fill="url(#fbc)"/>
<path d="M5.800 8.400Q5.800 6 8.200 6H48Q50.400 6 50.400 8.400V16H5.800Z" fill="#fdfcf4"/>
<path d="M5.800 9.600H50.400V12H5.800Z" fill="#f1ead2" opacity=".5"/>
<rect x="0" y="10.800" width="56.400" height="37.600" rx="5" fill="url(#fgc)"/>
<path d="M0 15.800Q0 10.800 5 10.800H51.400Q56.400 10.800 56.400 15.800V16.600Q56.400 11.800 51.400 11.800H5Q0 11.800 0 16.600Z" fill="#fbe98a" opacity=".7"/></svg>
<div class="t" style="left:594.7px;top:422px;font-size:13.8px;line-height:13.8px;color:#ffffff;letter-spacing:-0.32px;">UKUI OS</div>
<svg style="left:658.5px;top:331.8px;" width="22" height="22" viewBox="0 0 22 22"><circle cx="11" cy="11" r="10" fill="#4a69e2"/><polyline points="7.2,11.2 9.9,13.9 15,8.3" fill="none" stroke="#fff" stroke-width="1.25" stroke-linecap="round" stroke-linejoin="round"/></svg>
<div class="abs" style="left:694.2px;top:339.2px;width:103.8px;height:119.6px;background:#333436;border-radius:5px;overflow:hidden;"><div class="abs" style="left:0;top:75.800px;width:100%;height:44px;background:#4a69e2"></div></div>
<svg style="left:713.7px;top:363px;" width="64.6" height="39.2" viewBox="0 0 210 130"><defs><clipPath id="sct"><rect width="210" height="130"/></clipPath>
<linearGradient id="skt" x1="0" y1="0" x2="0" y2="1"><stop offset="0" stop-color="#2c7ed2"/><stop offset="0.2" stop-color="#4690d8"/><stop offset="0.36" stop-color="#74aade"/><stop offset="0.5" stop-color="#9cc0e0"/><stop offset="0.615" stop-color="#b0c6da"/></linearGradient>
<linearGradient id="set" x1="0" y1="0" x2="0" y2="1"><stop offset="0" stop-color="#86abc4"/><stop offset="0.12" stop-color="#6a9ab8"/><stop offset="0.4" stop-color="#4882a6"/><stop offset="1" stop-color="#2f6a8e"/></linearGradient>
<radialGradient id="slt" gradientUnits="userSpaceOnUse" cx="10" cy="74" r="120" gradientTransform="translate(0 74) scale(1 0.36) translate(0 -74)"><stop offset="0" stop-color="#d6c6d6" stop-opacity=".5"/><stop offset="0.5" stop-color="#d0c6da" stop-opacity=".25"/><stop offset="1" stop-color="#d0c8e0" stop-opacity="0"/></radialGradient>
<linearGradient id="cft" x1="0" y1="0" x2="0" y2="1"><stop offset="0" stop-color="#7d4a2c"/><stop offset="0.3" stop-color="#9a6238"/><stop offset="0.6" stop-color="#a97a52"/><stop offset="0.85" stop-color="#8a6a5c"/><stop offset="1" stop-color="#7a5c48"/></linearGradient>
<linearGradient id="clt" x1="0" y1="0" x2="0" y2="1"><stop offset="0" stop-color="#b58a6c"/><stop offset="0.5" stop-color="#97797a"/><stop offset="1" stop-color="#6c5f74"/></linearGradient>
<filter id="sbt" x="-30%" y="-30%" width="160%" height="160%"><feGaussianBlur stdDeviation="2.6"/></filter>
<filter id="sdt" x="-20%" y="-20%" width="140%" height="140%"><feGaussianBlur stdDeviation="0.8"/></filter>
<filter id="snt" x="0" y="0" width="100%" height="100%"><feGaussianBlur in="SourceGraphic" stdDeviation="0.7" result="sg"/><feTurbulence type="fractalNoise" baseFrequency="0.16 0.1" numOctaves="3" seed="4" result="n"/><feColorMatrix in="n" type="matrix" values="0 0 0 0 0.25  0 0 0 0 0.15  0 0 0 0 0.14  2.2 0 0 0 -1.0" result="nc"/><feComposite in="nc" in2="sg" operator="in" result="ni"/><feTurbulence type="fractalNoise" baseFrequency="0.12 0.2" numOctaves="2" seed="9" result="n2"/><feColorMatrix in="n2" type="matrix" values="0 0 0 0 0.82  0 0 0 0 0.56  0 0 0 0 0.36  0 1.8 0 0 -0.95" result="nc2"/><feComposite in="nc2" in2="sg" operator="in" result="ni2"/><feMerge><feMergeNode in="sg"/><feMergeNode in="ni"/><feMergeNode in="ni2"/></feMerge></filter>
<filter id="svt" x="0" y="0" width="100%" height="100%"><feGaussianBlur in="SourceGraphic" stdDeviation="0.6" result="sg"/><feTurbulence type="fractalNoise" baseFrequency="0.3 0.3" numOctaves="2" seed="2" result="n"/><feColorMatrix in="n" type="matrix" values="0 0 0 0 0.08  0 0 0 0 0.22  0 0 0 0 0.06  2.4 0 0 0 -1.0" result="nc"/><feComposite in="nc" in2="sg" operator="in" result="ni"/><feMerge><feMergeNode in="sg"/><feMergeNode in="ni"/></feMerge></filter>
</defs><g clip-path="url(#sct)">
<rect width="210" height="81" fill="url(#skt)"/>
<rect y="20" width="210" height="61" fill="url(#slt)"/>
<g filter="url(#sbt)" fill="#ece2ea" opacity=".85">
<path d="M2 10L30 20L58 36L44 40L16 30L0 32Z" opacity=".8"/>
<path d="M0 36L22 34L40 42L20 48L0 46Z" opacity=".75"/>
<path d="M50 16L78 24L100 38L84 42L62 32Z" opacity=".8"/>
<path d="M64 4L72 10L70 14L62 8Z" opacity=".6"/>
<path d="M86 2L96 12L92 16L84 6Z" opacity=".55"/>
<path d="M98 22L112 18L120 26L108 34L100 32Z" opacity=".7"/>
<path d="M128 4L142 0L146 6L134 12Z" fill="#f3d6dc" opacity=".9"/>
<path d="M112 34L140 30L146 36L120 42Z" opacity=".45"/>
</g>
<rect y="80" width="210" height="50" fill="url(#set)"/>
<g filter="url(#snt)">
<path d="M166 0H210V100L196 96L186 90L180 52L178 40L172 24L168 12Z" fill="url(#cft)"/>
<path d="M180 50L150 60L132 64L124 69L121 78L122 84L150 88L188 94L186 70Z" fill="url(#clt)"/>
<path d="M184 0L188 20L186 40L192 60L200 96L210 100V0Z" fill="#6e3f26" opacity=".5"/>
<path d="M170 14L176 12L182 30L186 52L180 52L176 36Z" fill="#c48a50" opacity=".55"/>
<path d="M128 70L150 64L170 62L176 74L150 80L126 80Z" fill="#bf957a" opacity=".5"/>
<path d="M121 83L150 87L186 92L210 100V106L184 99L150 93L123 87Z" fill="#a8743e" opacity=".85"/>
<path d="M103.500 83L104.500 72L106.500 66.500L109 64L114 64L116.500 67L116.500 76L115.500 83Z" fill="#96623a"/>
<path d="M105 75L109 70L113 73L112.500 82L104.500 82Z" fill="#c4904c" opacity=".7"/>
</g><g filter="url(#svt)">
<path d="M166 16L158 26L148 38L136 52L126 63L123 70L132 64L150 60L180 51L176 36L170 22Z" fill="#35702a"/>
<path d="M160 26L150 40L140 52L150 50L164 40Z" fill="#47853a" opacity=".55"/>
<path d="M106.500 66.500L109 63.500L114 63.500L116.500 66.500L112 68.500Z" fill="#2f6a2a"/>
</g><g filter="url(#sdt)">
<path d="M28 130L42 119L58 113L66 121L72 130Z" fill="#3a2f2e"/><path d="M42 119L58 113L62 119L50 123Z" fill="#5e4c44"/>
<path d="M85 110L90 104L94 108L92 111Z" fill="#5a4540"/><path d="M104 106L114 104L113 110L106 111Z" fill="#6a5048"/><path d="M118 100.500L126 98.500L129 101.500L122 102.500Z" fill="#8a5a3a"/>
<path d="M154 108L160 104L166 108L160 110.500Z" fill="#8a6248"/><path d="M176 108L190 104L198 112L188 117L178 114Z" fill="#8f7358" opacity=".75"/>
<path d="M128 127L140 123L156 126L160 130H128Z" fill="#4c4648"/><path d="M162 127L172 123L178 130H162Z" fill="#5c5252"/><path d="M178 130L184 121L192 124L196 130Z" fill="#8a6a50"/><path d="M200 117L210 112V125L204 123Z" fill="#9a7050"/>
</g>
<rect x="28" y="81.500" width="3" height="1" fill="#dfe8ee"/>
</g></svg>
<div class="t" style="left:713.3px;top:421px;font-size:14.6px;line-height:14.6px;color:#ffffff;letter-spacing:-0.13px;">1904 wall-</div>
<div class="t" style="left:712.95px;top:439px;font-size:14.6px;line-height:14.6px;color:#ffffff;letter-spacing:0.22px;">paper.png</div>
<svg style="left:782.5px;top:331.8px;" width="22" height="22" viewBox="0 0 22 22"><circle cx="11" cy="11" r="10" fill="#4a69e2"/><polyline points="7.2,11.2 9.9,13.9 15,8.3" fill="none" stroke="#fff" stroke-width="1.25" stroke-linecap="round" stroke-linejoin="round"/></svg>
<svg style="left:847.7px;top:353.7px;" width="45.6" height="56.6" viewBox="0 0 45.6 56.6"><defs><linearGradient id="dgp" x1="0" y1="0" x2="0" y2="1"><stop offset="0" stop-color="#f9bb32"/><stop offset="1" stop-color="#ec8610"/></linearGradient>
<linearGradient id="dfp" x1="0" y1="0" x2="1" y2="1"><stop offset="0" stop-color="#f9c862"/><stop offset="1" stop-color="#ee9a28"/></linearGradient></defs>
<path d="M5 0H40.600Q45.600 0 45.600 5V42.600L31.600 56.600H5Q0 56.600 0 51.600V5Q0 0 5 0Z" fill="url(#dgp)"/>
<path d="M45.600 42.600L31.600 56.600V46.600Q31.600 42.600 35.600 42.600Z" fill="url(#dfp)"/>
<g fill="#fdf0da"><rect x="8" y="19.600" width="4" height="21.200"/><rect x="16.300" y="30" width="3.400" height="10.800"/><rect x="23.300" y="34.200" width="3.700" height="6.600"/><path d="M29 23.600V15.400A8.200 8.200 0 1 0 37.200 23.600Z"/><path d="M30.600 22V14.400A7.600 7.600 0 0 1 38.200 22Z"/></g></svg>
<div class="t" style="left:842.5px;top:421px;font-size:14.6px;line-height:14.6px;color:#f0f0f0;letter-spacing:0.04px;">Pictures</div>
<svg style="left:351.7px;top:491.7px;" width="45.6" height="56.6" viewBox="0 0 45.6 56.6"><defs><linearGradient id="dgd" x1="0" y1="0" x2="0" y2="1"><stop offset="0" stop-color="#329fec"/><stop offset="1" stop-color="#2180d0"/></linearGradient>
<linearGradient id="dfd" x1="0" y1="0" x2="1" y2="1"><stop offset="0" stop-color="#6ab4ee"/><stop offset="1" stop-color="#2f8cd8"/></linearGradient></defs>
<path d="M5 0H40.600Q45.600 0 45.600 5V42.600L31.600 56.600H5Q0 56.600 0 51.600V5Q0 0 5 0Z" fill="url(#dgd)"/>
<path d="M45.600 42.600L31.600 56.600V46.600Q31.600 42.600 35.600 42.600Z" fill="url(#dfd)"/>
<g fill="#e9f4fd"><rect x="9.200" y="14.200" width="26.200" height="2.500"/><rect x="9.200" y="19.200" width="26.200" height="2"/><rect x="9.200" y="24.200" width="11.200" height="2.100"/><rect x="9.200" y="28.800" width="11.200" height="2.100"/><rect x="9.200" y="33.400" width="11.200" height="2.400"/><rect x="23.400" y="24.600" width="12" height="11.200"/></g></svg>
<div class="t" style="left:326.95px;top:560px;font-size:14.6px;line-height:14.6px;color:#f0f0f0;letter-spacing:0.88px;">Ubuntu Kylin</div>
<div class="t" style="left:329.2px;top:578px;font-size:14.6px;line-height:14.6px;color:#f0f0f0;letter-spacing:0.55px;">user experi...</div>
<svg style="left:475.7px;top:491.7px;" width="45.6" height="56.6" viewBox="0 0 45.6 56.6"><defs><linearGradient id="dge" x1="0" y1="0" x2="0" y2="1"><stop offset="0" stop-color="#5fcb52"/><stop offset="1" stop-color="#37a436"/></linearGradient>
<linearGradient id="dfe" x1="0" y1="0" x2="1" y2="1"><stop offset="0" stop-color="#86d478"/><stop offset="1" stop-color="#45b042"/></linearGradient></defs>
<path d="M5 0H40.600Q45.600 0 45.600 5V42.600L31.600 56.600H5Q0 56.600 0 51.600V5Q0 0 5 0Z" fill="url(#dge)"/>
<path d="M45.600 42.600L31.600 56.600V46.600Q31.600 42.600 35.600 42.600Z" fill="url(#dfe)"/>
<g fill="none" stroke="#e6f6dc" stroke-width="2.200"><rect x="8.300" y="15.300" width="27.800" height="19.800"/><path d="M8.300 22H36.100M8.300 28.400H36.100M16.800 15.300V35.100"/></g></svg>
<div class="t" style="left:444.2px;top:561px;font-size:14.6px;line-height:14.6px;color:#f0f0f0;letter-spacing:0.55px;">Question Feed-</div>
<div class="t" style="left:447.5px;top:579px;font-size:14.6px;line-height:14.6px;color:#f0f0f0;letter-spacing:0.56px;">back List-Do...</div>
<svg style="left:599.8px;top:491.7px;" width="45.6" height="56.6" viewBox="0 0 45.6 56.6"><defs><linearGradient id="dgf" x1="0" y1="0" x2="0" y2="1"><stop offset="0" stop-color="#f9bb32"/><stop offset="1" stop-color="#ec8610"/></linearGradient>
<linearGradient id="dff" x1="0" y1="0" x2="1" y2="1"><stop offset="0" stop-color="#f9c862"/><stop offset="1" stop-color="#ee9a28"/></linearGradient></defs>
<path d="M5 0H40.600Q45.600 0 45.600 5V42.600L31.600 56.600H5Q0 56.600 0 51.600V5Q0 0 5 0Z" fill="url(#dgf)"/>
<path d="M45.600 42.600L31.600 56.600V46.600Q31.600 42.600 35.600 42.600Z" fill="url(#dff)"/>
<g fill="#fdf0da"><rect x="8" y="19.600" width="4" height="21.200"/><rect x="16.300" y="30" width="3.400" height="10.800"/><rect x="23.300" y="34.200" width="3.700" height="6.600"/><path d="M29 23.600V15.400A8.200 8.200 0 1 0 37.200 23.600Z"/><path d="M30.600 22V14.400A7.600 7.600 0 0 1 38.200 22Z"/></g></svg>
<div class="t" style="left:584.55px;top:559px;font-size:14.6px;line-height:14.6px;color:#f0f0f0;letter-spacing:0.62px;">User login</div>
<div class="t" style="left:571.65px;top:577px;font-size:14.6px;line-height:14.6px;color:#f0f0f0;letter-spacing:1.04px;">competi....ppt</div>
<div class="abs" style="left:1000px;top:319.2px;width:1.6px;height:578px;background:#2b2c2f;"></div>
<svg style="left:1038px;top:337px;" width="210" height="130" viewBox="0 0 210 130"><defs><clipPath id="scp"><rect width="210" height="130"/></clipPath>
<linearGradient id="skp" x1="0" y1="0" x2="0" y2="1"><stop offset="0" stop-color="#2c7ed2"/><stop offset="0.2" stop-color="#4690d8"/><stop offset="0.36" stop-color="#74aade"/><stop offset="0.5" stop-color="#9cc0e0"/><stop offset="0.615" stop-color="#b0c6da"/></linearGradient>
<linearGradient id="sep" x1="0" y1="0" x2="0" y2="1"><stop offset="0" stop-color="#86abc4"/><stop offset="0.12" stop-color="#6a9ab8"/><stop offset="0.4" stop-color="#4882a6"/><stop offset="1" stop-color="#2f6a8e"/></linearGradient>
<radialGradient id="slp" gradientUnits="userSpaceOnUse" cx="10" cy="74" r="120" gradientTransform="translate(0 74) scale(1 0.36) translate(0 -74)"><stop offset="0" stop-color="#d6c6d6" stop-opacity=".5"/><stop offset="0.5" stop-color="#d0c6da" stop-opacity=".25"/><stop offset="1" stop-color="#d0c8e0" stop-opacity="0"/></radialGradient>
<linearGradient id="cfp" x1="0" y1="0" x2="0" y2="1"><stop offset="0" stop-color="#7d4a2c"/><stop offset="0.3" stop-color="#9a6238"/><stop offset="0.6" stop-color="#a97a52"/><stop offset="0.85" stop-color="#8a6a5c"/><stop offset="1" stop-color="#7a5c48"/></linearGradient>
<linearGradient id="clp" x1="0" y1="0" x2="0" y2="1"><stop offset="0" stop-color="#b58a6c"/><stop offset="0.5" stop-color="#97797a"/><stop offset="1" stop-color="#6c5f74"/></linearGradient>
<filter id="sbp" x="-30%" y="-30%" width="160%" height="160%"><feGaussianBlur stdDeviation="2.6"/></filter>
<filter id="sdp" x="-20%" y="-20%" width="140%" height="140%"><feGaussianBlur stdDeviation="0.8"/></filter>
<filter id="snp" x="0" y="0" width="100%" height="100%"><feGaussianBlur in="SourceGraphic" stdDeviation="0.7" result="sg"/><feTurbulence type="fractalNoise" baseFrequency="0.16 0.1" numOctaves="3" seed="4" result="n"/><feColorMatrix in="n" type="matrix" values="0 0 0 0 0.25  0 0 0 0 0.15  0 0 0 0 0.14  2.2 0 0 0 -1.0" result="nc"/><feComposite in="nc" in2="sg" operator="in" result="ni"/><feTurbulence type="fractalNoise" baseFrequency="0.12 0.2" numOctaves="2" seed="9" result="n2"/><feColorMatrix in="n2" type="matrix" values="0 0 0 0 0.82  0 0 0 0 0.56  0 0 0 0 0.36  0 1.8 0 0 -0.95" result="nc2"/><feComposite in="nc2" in2="sg" operator="in" result="ni2"/><feMerge><feMergeNode in="sg"/><feMergeNode in="ni"/><feMergeNode in="ni2"/></feMerge></filter>
<filter id="svp" x="0" y="0" width="100%" height="100%"><feGaussianBlur in="SourceGraphic" stdDeviation="0.6" result="sg"/><feTurbulence type="fractalNoise" baseFrequency="0.3 0.3" numOctaves="2" seed="2" result="n"/><feColorMatrix in="n" type="matrix" values="0 0 0 0 0.08  0 0 0 0 0.22  0 0 0 0 0.06  2.4 0 0 0 -1.0" result="nc"/><feComposite in="nc" in2="sg" operator="in" result="ni"/><feMerge><feMergeNode in="sg"/><feMergeNode in="ni"/></feMerge></filter>
</defs><g clip-path="url(#scp)">
<rect width="210" height="81" fill="url(#skp)"/>
<rect y="20" width="210" height="61" fill="url(#slp)"/>
<g filter="url(#sbp)" fill="#ece2ea" opacity=".85">
<path d="M2 10L30 20L58 36L44 40L16 30L0 32Z" opacity=".8"/>
<path d="M0 36L22 34L40 42L20 48L0 46Z" opacity=".75"/>
<path d="M50 16L78 24L100 38L84 42L62 32Z" opacity=".8"/>
<path d="M64 4L72 10L70 14L62 8Z" opacity=".6"/>
<path d="M86 2L96 12L92 16L84 6Z" opacity=".55"/>
<path d="M98 22L112 18L120 26L108 34L100 32Z" opacity=".7"/>
<path d="M128 4L142 0L146 6L134 12Z" fill="#f3d6dc" opacity=".9"/>
<path d="M112 34L140 30L146 36L120 42Z" opacity=".45"/>
</g>
<rect y="80" width="210" height="50" fill="url(#sep)"/>
<g filter="url(#snp)">
<path d="M166 0H210V100L196 96L186 90L180 52L178 40L172 24L168 12Z" fill="url(#cfp)"/>
<path d="M180 50L150 60L132 64L124 69L121 78L122 84L150 88L188 94L186 70Z" fill="url(#clp)"/>
<path d="M184 0L188 20L186 40L192 60L200 96L210 100V0Z" fill="#6e3f26" opacity=".5"/>
<path d="M170 14L176 12L182 30L186 52L180 52L176 36Z" fill="#c48a50" opacity=".55"/>
<path d="M128 70L150 64L170 62L176 74L150 80L126 80Z" fill="#bf957a" opacity=".5"/>
<path d="M121 83L150 87L186 92L210 100V106L184 99L150 93L123 87Z" fill="#a8743e" opacity=".85"/>
<path d="M103.500 83L104.500 72L106.500 66.500L109 64L114 64L116.500 67L116.500 76L115.500 83Z" fill="#96623a"/>
<path d="M105 75L109 70L113 73L112.500 82L104.500 82Z" fill="#c4904c" opacity=".7"/>
</g><g filter="url(#svp)">
<path d="M166 16L158 26L148 38L136 52L126 63L123 70L132 64L150 60L180 51L176 36L170 22Z" fill="#35702a"/>
<path d="M160 26L150 40L140 52L150 50L164 40Z" fill="#47853a" opacity=".55"/>
<path d="M106.500 66.500L109 63.500L114 63.500L116.500 66.500L112 68.500Z" fill="#2f6a2a"/>
</g><g filter="url(#sdp)">
<path d="M28 130L42 119L58 113L66 121L72 130Z" fill="#3a2f2e"/><path d="M42 119L58 113L62 119L50 123Z" fill="#5e4c44"/>
<path d="M85 110L90 104L94 108L92 111Z" fill="#5a4540"/><path d="M104 106L114 104L113 110L106 111Z" fill="#6a5048"/><path d="M118 100.500L126 98.500L129 101.500L122 102.500Z" fill="#8a5a3a"/>
<path d="M154 108L160 104L166 108L160 110.500Z" fill="#8a6248"/><path d="M176 108L190 104L198 112L188 117L178 114Z" fill="#8f7358" opacity=".75"/>
<path d="M128 127L140 123L156 126L160 130H128Z" fill="#4c4648"/><path d="M162 127L172 123L178 130H162Z" fill="#5c5252"/><path d="M178 130L184 121L192 124L196 130Z" fill="#8a6a50"/><path d="M200 117L210 112V125L204 123Z" fill="#9a7050"/>
</g>
<rect x="28" y="81.500" width="3" height="1" fill="#dfe8ee"/>
</g><rect x=".5" y=".5" width="209" height="129" fill="none" stroke="#6a655e" stroke-width="1"/></svg>
<div class="t" style="left:1037.7px;top:497px;font-size:14.2px;line-height:14.2px;color:#ececec;letter-spacing:0.24px;">Name:</div>
<div class="t" style="left:1037.7px;top:527px;font-size:14.2px;line-height:14.2px;color:#ececec;letter-spacing:0.54px;">Type:</div>
<div class="t" style="left:1037.7px;top:557px;font-size:14.2px;line-height:14.2px;color:#ececec;letter-spacing:-0.09px;">Size:</div>
<div class="t" style="left:1040.4px;top:587px;font-size:14.2px;line-height:14.2px;color:#ececec;letter-spacing:-0.14px;">Access:</div>
<div class="t" style="left:1037.7px;top:617px;font-size:14.2px;line-height:14.2px;color:#ececec;letter-spacing:0.57px;">Modified:</div>
<div class="t" style="left:1037.7px;top:647px;font-size:14.2px;line-height:14.2px;color:#ececec;letter-spacing:0.01px;">Img Size:</div>
<div class="t" style="left:1037.7px;top:677px;font-size:14.2px;line-height:14.2px;color:#ececec;letter-spacing:0.55px;">Format:</div>
<div class="t" style="left:1114.3px;top:499px;font-size:14px;line-height:14px;color:#ececec;letter-spacing:0.4px;">1904 wallpaper.png</div>
<div class="t" style="left:1114.3px;top:529px;font-size:14px;line-height:14px;color:#ececec;letter-spacing:0.77px;">png</div>
<div class="t" style="left:1114.3px;top:558px;font-size:14px;line-height:14px;color:#ececec;letter-spacing:-0.31px;">715KB</div>
<div class="t" style="left:1114.3px;top:588px;font-size:14px;line-height:14px;color:#ececec;letter-spacing:0.03px;">2019/06/06  14:03:22</div>
<div class="t" style="left:1114.3px;top:618px;font-size:14px;line-height:14px;color:#ececec;letter-spacing:0.03px;">2019/06/06  14:03:22</div>
<div class="t" style="left:1114.3px;top:648px;font-size:14px;line-height:14px;color:#ececec;letter-spacing:-0.07px;">1600x900</div>
<div class="t" style="left:1114.3px;top:679px;font-size:13.2px;line-height:13.2px;color:#ececec;letter-spacing:-0.65px;">RGB</div>
<div class="abs" style="left:1020px;top:838px;width:54px;height:54px;background:#4a6ae2;border-radius:4px;"></div>
<svg style="left:1039.3px;top:846px;" width="16" height="16" viewBox="0 0 16 16"><path d="M13.800 5.200A6.600 6.600 0 1 0 14.600 9.600" fill="none" stroke="#fff" stroke-width="1.500" stroke-linecap="round"/><path d="M10.200 1.200L14.600 2.200L13.400 6.400" fill="none" stroke="#fff" stroke-width="1.500" stroke-linecap="round" stroke-linejoin="round"/><circle cx="8" cy="8.400" r="2" fill="#fff"/></svg>
<div class="t" style="left:1025.7px;top:871px;font-size:14.2px;line-height:14.2px;color:#ffffff;letter-spacing:0.15px;">Rotate</div>
<svg style="left:1102.7px;top:846px;" width="16" height="16" viewBox="0 0 16 16"><circle cx="8" cy="8" r="7.200" fill="none" stroke="#8f9093" stroke-width="1.400"/><path d="M5.400 14.200V8.400L8 4.400L10.600 8.400V14.200" fill="none" stroke="#8f9093" stroke-width="1.400" stroke-linejoin="round"/><path d="M6.800 14V9.800H9.200V14Z" fill="#1f2022"/><path d="M6.300 8.200L8 5.600L9.700 8.200Z" fill="#8f9093"/></svg>
<div class="t" style="left:1097.3px;top:871px;font-size:14.2px;line-height:14.2px;color:#ececec;letter-spacing:0.31px;">Edit</div>
<svg style="left:1168px;top:847px;" width="14" height="14" viewBox="0 0 14 14"><line x1="0.3" y1="0.3" x2="13.7" y2="13.7" stroke="#8f9093" stroke-width="1.4" stroke-linecap="butt"/><line x1="13.7" y1="0.3" x2="0.3" y2="13.7" stroke="#8f9093" stroke-width="1.4" stroke-linecap="butt"/></svg>
<div class="t" style="left:1153.35px;top:871px;font-size:14.2px;line-height:14.2px;color:#ececec;letter-spacing:0.13px;">Delete</div>
<svg style="left:1231px;top:846px;" width="16" height="16" viewBox="0 0 16 16"><circle cx="8" cy="8" r="7.200" fill="none" stroke="#8f9093" stroke-width="1.400"/><circle cx="4.600" cy="8" r="1" fill="#8f9093"/><circle cx="8" cy="8" r="1" fill="#8f9093"/><circle cx="11.400" cy="8" r="1" fill="#8f9093"/></svg>
<div class="t" style="left:1222.25px;top:871px;font-size:14.2px;line-height:14.2px;color:#ececec;letter-spacing:0.12px;">More</div>
<div class="t" style="left:338.1px;top:871px;font-size:14px;line-height:14px;color:#ececec;letter-spacing:0.05px;">9 items</div>
<div class="t" style="left:403.3px;top:871px;font-size:14px;line-height:14px;color:#ececec;letter-spacing:-0.08px;">Select 1 item</div>
<div class="t" style="left:502.7px;top:871px;font-size:14px;line-height:14px;color:#ececec;letter-spacing:-0.61px;">715KB</div>
<div class="abs" style="left:885.7px;top:874.8px;width:93.3px;height:4px;background:#2d2e32;border-radius:2px;"></div>
<div class="abs" style="left:885.7px;top:874.8px;width:47.3px;height:4px;background:#5b7be9;border-radius:2px;"></div>
<div class="abs" style="left:923px;top:866.8px;width:20px;height:20px;background:#4e6de3;border-radius:50%;"></div>
<!-- taskbar -->
<div class="abs" style="left:0px;top:1033.8px;width:1920px;height:46.4px;background:linear-gradient(90deg,#0c474a 0,#0d4548 14%,#173a40 16.5%,#28282f 18.5%,#30202c 21%,#31262e 27%,#36212c 31.5%,#3b1a2c 36%,#331d30 39.5%,#232640 42%,#1c2a40 45%,#2a2338 47.5%,#391b2e 50%,#3a1a2a 55%,#3a272a 58%,#3a2c30 62%,#30263a 65%,#1e1b3a 67.5%,#0d1c3a 70%,#071c38 73%,#082440 81%,#0a2846 100%);"></div>
<svg style="left:16.3px;top:1039.7px;" width="35" height="35" viewBox="0 0 35 35"><defs><radialGradient id="tsg" cx="0.5" cy="0.4" r="0.6"><stop offset="0" stop-color="#6aa2f4"/><stop offset="1" stop-color="#2f6fde"/></radialGradient>
<linearGradient id="tsi" x1="0" y1="0" x2="0" y2="1"><stop offset="0" stop-color="#ffffff"/><stop offset="1" stop-color="#c9ced8"/></linearGradient></defs>
<circle cx="17.500" cy="17.500" r="17.200" fill="url(#tsg)"/><circle cx="17.500" cy="17.500" r="14.400" fill="none" stroke="#8dbaf8" stroke-width="1" opacity=".6"/>
<circle cx="17.500" cy="17.500" r="11.200" fill="url(#tsi)"/>
<text x="17.500" y="21.700" font-family="Liberation Sans,sans-serif" font-size="11.500" font-weight="bold" font-style="italic" text-anchor="middle" fill="#2b62cf" letter-spacing="-0.6">UK</text></svg>
<div class="abs" style="left:92.7px;top:1046.9px;width:25.3px;height:16.6px;background:#7f9b9c;"></div>
<div class="abs" style="left:86.9px;top:1051.7px;width:25.6px;height:16.3px;background:#f1f1f1;"></div>
<svg style="left:164.6px;top:1041.4px;" width="30" height="31" viewBox="0 0 30 31"><defs><linearGradient id="ffa" x1="0.95" y1="0.3" x2="0.1" y2="0.85"><stop offset="0" stop-color="#fff24a"/><stop offset="0.3" stop-color="#ffa22a"/><stop offset="0.62" stop-color="#ff4a4c"/><stop offset="1" stop-color="#f41e86"/></linearGradient>
<linearGradient id="ffb" x1="0" y1="0" x2="1" y2="1"><stop offset="0" stop-color="#7a4ae0"/><stop offset="0.5" stop-color="#a85cf6"/><stop offset="1" stop-color="#7a48e8"/></linearGradient></defs>
<path fill-rule="evenodd" d="M15 1.400A14.600 14.600 0 1 0 15.010 1.400ZM17.400 5.200A7.400 7.400 0 1 1 17.390 5.200Z" fill="url(#ffa)"/>
<path d="M8.600 3.400Q15.500 -1 23 4Q29.500 9 28.200 17.500Q26.500 10 20.500 7Q14.500 3.600 8.600 3.400Z" fill="url(#ffb)"/>
<path d="M10.600 11.200Q13 9.600 15.200 10.600Q13 12.400 13.400 15.600Q10.800 14 10.600 11.200Z" fill="#ffd53a"/></svg>
<svg style="left:232.3px;top:1042px;" width="30" height="30" viewBox="0 0 21 21"><defs><linearGradient id="klg2" x1="0" y1="0.15" x2="0.9" y2="1">
<stop offset="0" stop-color="#25c5ff"/><stop offset="0.2" stop-color="#2d80f8"/><stop offset="0.4" stop-color="#5a1cf0"/><stop offset="0.65" stop-color="#9a10f0"/><stop offset="1" stop-color="#d018e4"/></linearGradient></defs>
<path d="M0.400 20.600V10.500A10.100 10.100 0 1 1 10.500 20.600Z" fill="url(#klg2)"/>
<circle cx="11" cy="10.400" r="6.200" fill="#180a3e"/>
<path d="M8.800 6.900L14.600 10.400L8.800 13.900Z" fill="#fff"/></svg>
<svg style="left:295.8px;top:1041.4px;" width="30" height="31" viewBox="0 0 30 31"><circle cx="15" cy="15.400" r="14.600" fill="#161616"/><circle cx="15" cy="15.400" r="14.200" fill="none" stroke="#8a7a6a" stroke-width=".7" opacity=".8"/>
<circle cx="15" cy="15.400" r="10.500" fill="none" stroke="#3c3c3c" stroke-width="1"/><circle cx="15" cy="15.400" r="7.600" fill="none" stroke="#333" stroke-width="1"/>
<path d="M4 8L26 23M3 17L27 14" stroke="#4a4a4a" stroke-width=".8" opacity=".7"/>
<circle cx="14.200" cy="17.200" r="4.600" fill="#e8203a"/><circle cx="14.200" cy="17.200" r="1" fill="#161616"/>
<path d="M17.600 17V3.200L24.600 0.600V4.400L19.400 6.200V17Z" fill="#f02844"/></svg>
<svg style="left:362.5px;top:1042.7px;" width="31.8" height="26.6" viewBox="0 0 31.8 26.6"><defs><linearGradient id="tfg" x1="0" y1="0" x2="0" y2="1"><stop offset="0" stop-color="#f9e055"/><stop offset="1" stop-color="#edc92f"/></linearGradient></defs>
<path d="M0 2.400Q0 0 2.400 0H10Q11.200 0 12 1L13 2.200H29.400Q31.800 2.200 31.800 4.600V12H0Z" fill="#f2b733"/>
<rect x="2" y="3.800" width="25" height="3" fill="#fff7d0" opacity=".9"/>
<path d="M0 6.400H31.800V24.200Q31.800 26.600 29.400 26.600H2.400Q0 26.600 0 24.200Z" fill="url(#tfg)"/></svg>
<svg style="left:432.7px;top:1042px;" width="27.2" height="26.8" viewBox="0 0 27.2 26.8"><defs><clipPath id="tsc"><rect width="27.200" height="26.800" rx="3.600"/></clipPath>
<linearGradient id="tsr" x1="0" y1="0" x2="1" y2="0"><stop offset="0" stop-color="#f86a4a"/><stop offset="0.2" stop-color="#f8b03a"/><stop offset="0.4" stop-color="#b8e04a"/><stop offset="0.6" stop-color="#4ad0a0"/><stop offset="0.8" stop-color="#4a90f0"/><stop offset="1" stop-color="#a04af0"/></linearGradient>
<linearGradient id="tsy" x1="0" y1="0" x2="0" y2="1"><stop offset="0" stop-color="#f8c830"/><stop offset="1" stop-color="#fde48a"/></linearGradient></defs>
<g clip-path="url(#tsc)"><rect width="27.200" height="26.800" fill="#f7f7f9"/><rect width="27.200" height="7" fill="url(#tsy)"/><rect y="3" width="27.200" height="1.200" fill="#fff3c0" opacity=".7"/>
<path d="M0 22Q4 18.500 8 21Q12 23.500 17 21Q22 18.500 27.200 16V26.800H0Z" fill="url(#tsr)"/></g>
<rect x=".4" y=".4" width="26.400" height="26" rx="3.400" fill="none" stroke="#d9c9b0" stroke-width=".8"/>
<path d="M8.200 12.200Q13.600 20 19 12.200" fill="none" stroke="#4a5ad0" stroke-width="1.300" stroke-linecap="round"/><circle cx="8.200" cy="12" r="1" fill="#4a5ad0"/><circle cx="19" cy="12" r="1" fill="#4a5ad0"/></svg>
<svg style="left:499px;top:1040.6px;" width="30" height="30" viewBox="0 0 30 30"><circle cx="15" cy="15" r="14.800" fill="#b9b9b9"/><rect x="12.400" y="3.200" width="5.200" height="6" rx="1" fill="#5c5c5c" transform="rotate(0 15 15)"/><rect x="12.400" y="3.200" width="5.200" height="6" rx="1" fill="#5c5c5c" transform="rotate(45 15 15)"/><rect x="12.400" y="3.200" width="5.200" height="6" rx="1" fill="#5c5c5c" transform="rotate(90 15 15)"/><rect x="12.400" y="3.200" width="5.200" height="6" rx="1" fill="#5c5c5c" transform="rotate(135 15 15)"/><rect x="12.400" y="3.200" width="5.200" height="6" rx="1" fill="#5c5c5c" transform="rotate(180 15 15)"/><rect x="12.400" y="3.200" width="5.200" height="6" rx="1" fill="#5c5c5c" transform="rotate(225 15 15)"/><rect x="12.400" y="3.200" width="5.200" height="6" rx="1" fill="#5c5c5c" transform="rotate(270 15 15)"/><rect x="12.400" y="3.200" width="5.200" height="6" rx="1" fill="#5c5c5c" transform="rotate(315 15 15)"/><circle cx="15" cy="15" r="9" fill="#5c5c5c"/><circle cx="15" cy="15" r="6.400" fill="#b9b9b9"/><circle cx="15" cy="15" r="4.600" fill="none" stroke="#5c5c5c" stroke-width="2.200"/></svg>
<div class="abs" style="left:233px;top:1078.6px;width:28px;height:2px;background:linear-gradient(90deg,rgba(190,200,210,0),rgba(190,200,210,.45) 30%,rgba(190,200,210,.45) 70%,rgba(190,200,210,0));border-radius:1px;"></div>
<div class="abs" style="left:364px;top:1078.6px;width:28px;height:2px;background:linear-gradient(90deg,rgba(190,200,210,0),rgba(190,200,210,.45) 30%,rgba(190,200,210,.45) 70%,rgba(190,200,210,0));border-radius:1px;"></div>
<div class="abs" style="left:432px;top:1078.6px;width:28px;height:2px;background:linear-gradient(90deg,rgba(190,200,210,0),rgba(190,200,210,.45) 30%,rgba(190,200,210,.45) 70%,rgba(190,200,210,0));border-radius:1px;"></div>
<div class="abs" style="left:500px;top:1078.6px;width:28px;height:2px;background:linear-gradient(90deg,rgba(190,200,210,0),rgba(190,200,210,.45) 30%,rgba(190,200,210,.45) 70%,rgba(190,200,210,0));border-radius:1px;"></div>
<svg style="left:1544.2px;top:1052.6px;" width="13" height="7.6" viewBox="0 0 13 7.6"><polyline points="0.700,7 6.500,1 12.300,7" fill="none" stroke="#e4e8ee" stroke-width="1.500" stroke-linecap="round" stroke-linejoin="round"/></svg>
<div class="t" style="left:1582.8px;top:1049px;font-size:15.2px;line-height:15.2px;color:#d5dae2;font-family:"Liberation Sans","Noto Sans CJK SC",sans-serif;">中</div>
<svg style="left:1624px;top:1048.4px;" width="12" height="17.4" viewBox="0 0 12 17.4"><path d="M0.700 4.700L11 13.200L6 16.800V0.600L11 4.200L0.700 12.700" fill="none" stroke="#c5ccd6" stroke-width="1.100" stroke-linejoin="round"/></svg>
<svg style="left:1661px;top:1051.6px;" width="19.8" height="12" viewBox="0 0 19.8 12"><rect x="0.500" y="0.500" width="17" height="11" rx="1.200" fill="#0a2744" stroke="#e4e8ee" stroke-width="1"/><rect x="0.500" y="0.500" width="13" height="11" rx="1" fill="#e4e8ee"/><rect x="18.200" y="3.400" width="1.600" height="5.200" rx=".6" fill="#e4e8ee"/><path d="M8.600 1.800L5.200 6.600H7.600L6.600 10.200L10.200 5.400H7.800Z" fill="#0a2744"/></svg>
<svg style="left:1702px;top:1048.4px;" width="18" height="18" viewBox="0 0 18 18"><g fill="none" stroke="#c5ccd6" stroke-width="1.100"><rect x="0.600" y="3.200" width="12.800" height="9.200"/><path d="M7 12.400V16M3.400 16.400H10.600"/><path d="M14.400 1V3.400M16.800 1V3.400"/><rect x="13.400" y="3.400" width="4.200" height="4.400" rx=".8"/><path d="M15.500 7.800V12.600Q15.500 14.400 13.600 14.400H12"/></g></svg>
<svg style="left:1741.6px;top:1048.8px;" width="16" height="16.4" viewBox="0 0 16 16.4"><g fill="none" stroke="#aab4c2" stroke-width="1.100" stroke-linejoin="round"><path d="M0.600 5.600H3.600L8.200 1V15.400L3.600 10.800H0.600Z"/><path d="M10.400 5.400Q12 8.200 10.400 11" opacity=".9"/><path d="M12.800 3.400Q15.600 8.200 12.800 13" opacity=".45"/></g></svg>
<div class="t" style="left:1783.6px;top:1043px;font-size:12.9px;line-height:12.9px;color:#bcc4cf;letter-spacing:-0.26px;">15:48  Wed</div>
<div class="t" style="left:1783.6px;top:1059px;font-size:12.9px;line-height:12.9px;color:#bcc4cf;letter-spacing:0.55px;">2020/2/19</div>
<svg style="left:1867.6px;top:1042.4px;" width="28" height="28" viewBox="0 0 28 28"><path d="M14.860 1.745A9.500 9.500 0 1 0 25.650 14.930A9 9 0 0 1 14.860 1.745Z" fill="#eef1f5"/>
<path d="M5.400 27H18.400A4.300 4.300 0 0 0 19.200 18.500A6.200 6.200 0 0 0 7.600 17.600A4.800 4.800 0 0 0 5.400 27Z" fill="#0a2947" stroke="#eef1f5" stroke-width="1.300" stroke-linejoin="round"/></svg>
<div class="abs" style="left:1912.4px;top:1034.2px;width:1.4px;height:46px;background:#4c5a70;"></div>
<!-- cursor -->
<svg style="left:412px;top:742.6px;" width="34" height="34" viewBox="0 0 34 34"><path d="M1.200 1.200L31.600 14.200L17.600 18.200L13.800 32.400Z" fill="#0a0a0a" stroke="#ffffff" stroke-width="1.500" stroke-linejoin="miter"/></svg>
</div>
</body>
</html>
